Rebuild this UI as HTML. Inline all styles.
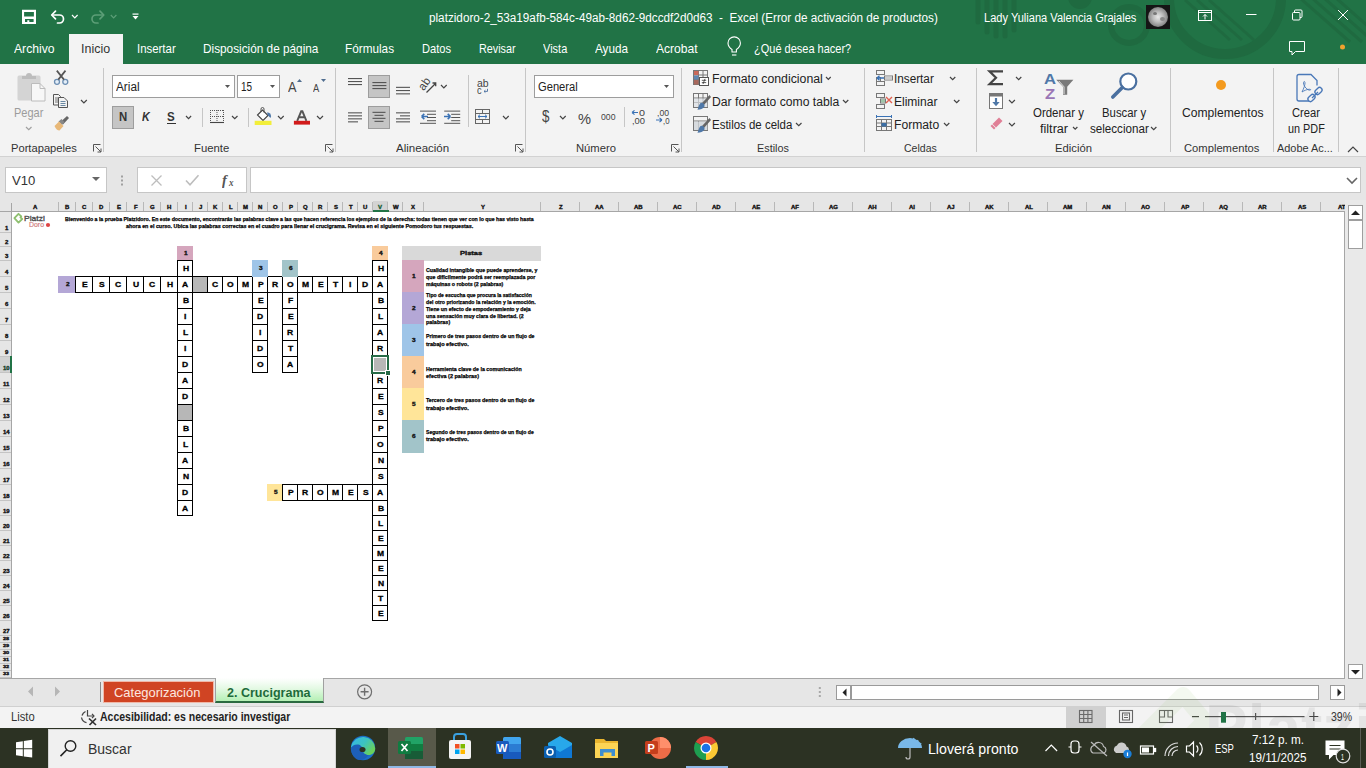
<!DOCTYPE html><html><head><meta charset="utf-8"><style>
*{margin:0;padding:0;box-sizing:border-box}
html,body{width:1366px;height:768px;overflow:hidden;background:#fff;font-family:"Liberation Sans", sans-serif}
.a{position:absolute}
.t{position:absolute;white-space:nowrap}
svg{position:absolute;overflow:visible}
</style></head><body>
<div class="a" style="left:0;top:0;width:1366px;height:64px;background:#217346;overflow:hidden">
<svg style="left:0;top:0" width="1366" height="64">
<g stroke="#1f6a40" stroke-linecap="round" stroke-width="5">
<line x1="978" y1="-5" x2="978" y2="22"/><line x1="987" y1="-5" x2="987" y2="32"/><line x1="996" y1="-5" x2="996" y2="36"/><line x1="1005" y1="-5" x2="1005" y2="36"/><line x1="1014" y1="-5" x2="1014" y2="30"/>
</g>
<circle cx="1080" cy="-3" r="12" fill="#1f6a40"/>
<circle cx="1129" cy="25" r="18" fill="none" stroke="#1f6a40" stroke-width="6"/>
<circle cx="1225" cy="-2" r="56" fill="none" stroke="#1f6a40" stroke-width="10"/>
<g stroke="#1f6a40" stroke-width="3">
<line x1="1185" y1="0" x2="1230" y2="40"/><line x1="1197" y1="0" x2="1242" y2="40"/><line x1="1209" y1="0" x2="1254" y2="40"/>
<line x1="1300" y1="-2" x2="1350" y2="42"/><line x1="1312" y1="-2" x2="1362" y2="42"/><line x1="1324" y1="-2" x2="1374" y2="42"/><line x1="1336" y1="-2" x2="1386" y2="42"/>
</g></svg>
</div>
<svg style="left:0;top:0" width="160" height="34">
<path d="M22 9.8 h14 v14.3 h-14 z M24.1 11.9 v4.6 h9.8 v-4.6 z M25 19 v3.1 h2.3 v-1.8 h2 v1.8 h4.3 v-3.1 z" fill="#fff" fill-rule="evenodd"/>
<g fill="none" stroke="#fff" stroke-width="1.7" stroke-linecap="round" stroke-linejoin="round">
<path d="M52.5 15 h7 a4 4 0 0 1 0 8 h-2"/>
<path d="M55.5 11.2 L51.7 15 L55.5 18.8"/>
</g>
<path d="M72 15 l2.8 2.8 l2.8 -2.8" fill="none" stroke="#fff" stroke-width="1.2"/>
<g fill="none" stroke="#5c9e77" stroke-width="1.7" stroke-linecap="round" stroke-linejoin="round">
<path d="M103 15 h-7 a4 4 0 0 0 0 8 h2"/>
<path d="M100 11.2 L103.8 15 L100 18.8"/>
</g>
<path d="M110.8 15 l2.8 2.8 l2.8 -2.8" fill="none" stroke="#5c9e77" stroke-width="1.2"/>
<g fill="#fff">
<rect x="132.5" y="13.5" width="6" height="1.2"/>
<path d="M132.5 16 h6 l-3 3.6 z"/>
</g>
</svg>
<div class="t" style="left:428.60px;top:12.47px;font-family:'Liberation Sans';font-size:12.5px;line-height:12.5px;font-weight:normal;font-style:normal;color:#fff;transform:scaleX(0.9377);transform-origin:0 10.62px;">platzidoro-2_53a19afb-584c-49ab-8d62-9dccdf2d0d63&nbsp; - &nbsp;Excel (Error de activación de productos)</div>
<div class="t" style="left:984.41px;top:12.07px;font-family:'Liberation Sans';font-size:12.5px;line-height:12.5px;font-weight:normal;font-style:normal;color:#fff;transform:scaleX(0.8867);transform-origin:0 10.62px;">Lady Yuliana Valencia Grajales</div>
<div class="a" style="left:1146px;top:5px;width:24px;height:24px;background:#151515"></div>
<div class="a" style="left:1148px;top:7px;width:20px;height:20px;border-radius:50%;background:radial-gradient(circle at 50% 50%,#e8e8e8 0,#bdbdbd 35%,#8c8c8c 65%,#3a3a3a 92%,#151515 100%)"></div>
<div class="a" style="left:1153px;top:12px;width:4px;height:3px;border-radius:50%;background:#777"></div>
<div class="a" style="left:1160px;top:17px;width:5px;height:4px;border-radius:50%;background:#888"></div>
<svg style="left:0;top:0" width="1366" height="64">
<g fill="none" stroke="#fff" stroke-width="1">
<rect x="1198.5" y="10.5" width="13" height="10"/>
<line x1="1198.5" y1="12.5" x2="1211.5" y2="12.5"/>
<path d="M1205 19.5 v-5 M1203 16.5 l2 -2 l2 2"/>
<line x1="1246" y1="14.5" x2="1256.5" y2="14.5"/>
<rect x="1292.5" y="12.5" width="7.5" height="7.5" rx="1"/>
<path d="M1294.5 12 v-1 a1 1 0 0 1 1 -1 h5.5 a1 1 0 0 1 1 1 v5.5 a1 1 0 0 1 -1 1 h-1"/>
<path d="M1338 10 l10 10 M1348 10 l-10 10"/>
<path d="M1289.5 41.5 h15 v10 h-9 l-3.5 3.5 v-3.5 h-2.5 z"/>
</g>
<circle cx="1342.5" cy="47" r="2.5" fill="#f0a22e"/>
</svg>
<div class="a" style="left:69px;top:34px;width:54px;height:30px;background:#f3f3f3"></div>
<div class="t" style="left:13.50px;top:42.35px;font-family:'Liberation Sans';font-size:13px;line-height:13px;font-weight:normal;font-style:normal;color:#fff;transform:scaleX(0.9370);transform-origin:0 11.05px;">Archivo</div>
<div class="t" style="left:80.54px;top:42.35px;font-family:'Liberation Sans';font-size:13px;line-height:13px;font-weight:normal;font-style:normal;color:#333;transform:scaleX(0.9582);transform-origin:0 11.05px;">Inicio</div>
<div class="t" style="left:136.52px;top:42.35px;font-family:'Liberation Sans';font-size:13px;line-height:13px;font-weight:normal;font-style:normal;color:#fff;transform:scaleX(0.8779);transform-origin:0 11.05px;">Insertar</div>
<div class="t" style="left:202.79px;top:42.35px;font-family:'Liberation Sans';font-size:13px;line-height:13px;font-weight:normal;font-style:normal;color:#fff;transform:scaleX(0.9073);transform-origin:0 11.05px;">Disposición de página</div>
<div class="t" style="left:345.09px;top:42.35px;font-family:'Liberation Sans';font-size:13px;line-height:13px;font-weight:normal;font-style:normal;color:#fff;transform:scaleX(0.9054);transform-origin:0 11.05px;">Fórmulas</div>
<div class="t" style="left:421.75px;top:42.35px;font-family:'Liberation Sans';font-size:13px;line-height:13px;font-weight:normal;font-style:normal;color:#fff;transform:scaleX(0.8548);transform-origin:0 11.05px;">Datos</div>
<div class="t" style="left:478.67px;top:42.35px;font-family:'Liberation Sans';font-size:13px;line-height:13px;font-weight:normal;font-style:normal;color:#fff;transform:scaleX(0.8300);transform-origin:0 11.05px;">Revisar</div>
<div class="t" style="left:542.50px;top:42.35px;font-family:'Liberation Sans';font-size:13px;line-height:13px;font-weight:normal;font-style:normal;color:#fff;transform:scaleX(0.8459);transform-origin:0 11.05px;">Vista</div>
<div class="t" style="left:595.00px;top:42.35px;font-family:'Liberation Sans';font-size:13px;line-height:13px;font-weight:normal;font-style:normal;color:#fff;transform:scaleX(0.9012);transform-origin:0 11.05px;">Ayuda</div>
<div class="t" style="left:656.00px;top:42.35px;font-family:'Liberation Sans';font-size:13px;line-height:13px;font-weight:normal;font-style:normal;color:#fff;transform:scaleX(0.9294);transform-origin:0 11.05px;">Acrobat</div>
<div class="t" style="left:754.00px;top:42.35px;font-family:'Liberation Sans';font-size:13px;line-height:13px;font-weight:normal;font-style:normal;color:#fff;transform:scaleX(0.8459);transform-origin:0 11.05px;">¿Qué desea hacer?</div>
<svg style="left:0;top:0" width="800" height="64">
<g fill="none" stroke="#fff" stroke-width="1.1">
<path d="M732 52 v-2.5 c-2.6 -1.6 -4 -3.8 -4 -6.4 a6.2 6.2 0 0 1 12.4 0 c0 2.6 -1.4 4.8 -4 6.4 v2.5 z"/>
<line x1="732" y1="55" x2="736.4" y2="55"/>
</g></svg>
<div class="a" style="left:0;top:64px;width:1366px;height:92px;background:#f3f3f3"></div>
<div class="a" style="left:0;top:156px;width:1366px;height:1px;background:#d2d2d2"></div>
<div class="a" style="left:103px;top:68px;width:1px;height:84px;background:#c6c6c6"></div>
<div class="a" style="left:335px;top:68px;width:1px;height:84px;background:#c6c6c6"></div>
<div class="a" style="left:525px;top:68px;width:1px;height:84px;background:#c6c6c6"></div>
<div class="a" style="left:681px;top:68px;width:1px;height:84px;background:#c6c6c6"></div>
<div class="a" style="left:864px;top:68px;width:1px;height:84px;background:#c6c6c6"></div>
<div class="a" style="left:976px;top:68px;width:1px;height:84px;background:#c6c6c6"></div>
<div class="a" style="left:1170px;top:68px;width:1px;height:84px;background:#c6c6c6"></div>
<div class="a" style="left:1273px;top:68px;width:1px;height:84px;background:#c6c6c6"></div>
<div class="a" style="left:1338px;top:68px;width:1px;height:84px;background:#c6c6c6"></div>
<div class="t" style="left:10.50px;top:142.72px;font-family:'Liberation Sans';font-size:11.5px;line-height:11.5px;font-weight:normal;font-style:normal;color:#333;transform:scaleX(0.9703);transform-origin:0 9.78px;">Portapapeles</div>
<div class="t" style="left:193.60px;top:142.72px;font-family:'Liberation Sans';font-size:11.5px;line-height:11.5px;font-weight:normal;font-style:normal;color:#333;transform:scaleX(0.9857);transform-origin:0 9.78px;">Fuente</div>
<div class="t" style="left:395.70px;top:142.72px;font-family:'Liberation Sans';font-size:11.5px;line-height:11.5px;font-weight:normal;font-style:normal;color:#333;transform:scaleX(1.0025);transform-origin:0 9.78px;">Alineación</div>
<div class="t" style="left:575.70px;top:142.72px;font-family:'Liberation Sans';font-size:11.5px;line-height:11.5px;font-weight:normal;font-style:normal;color:#333;transform:scaleX(0.9776);transform-origin:0 9.78px;">Número</div>
<div class="t" style="left:756.60px;top:142.72px;font-family:'Liberation Sans';font-size:11.5px;line-height:11.5px;font-weight:normal;font-style:normal;color:#333;transform:scaleX(0.9408);transform-origin:0 9.78px;">Estilos</div>
<div class="t" style="left:903.50px;top:142.72px;font-family:'Liberation Sans';font-size:11.5px;line-height:11.5px;font-weight:normal;font-style:normal;color:#333;transform:scaleX(0.9155);transform-origin:0 9.78px;">Celdas</div>
<div class="t" style="left:1054.80px;top:142.72px;font-family:'Liberation Sans';font-size:11.5px;line-height:11.5px;font-weight:normal;font-style:normal;color:#333;transform:scaleX(0.9807);transform-origin:0 9.78px;">Edición</div>
<div class="t" style="left:1183.60px;top:142.72px;font-family:'Liberation Sans';font-size:11.5px;line-height:11.5px;font-weight:normal;font-style:normal;color:#333;transform:scaleX(0.9744);transform-origin:0 9.78px;">Complementos</div>
<div class="t" style="left:1277.30px;top:142.72px;font-family:'Liberation Sans';font-size:11.5px;line-height:11.5px;font-weight:normal;font-style:normal;color:#333;transform:scaleX(0.9501);transform-origin:0 9.78px;">Adobe Ac...</div>
<svg style="left:92.5px;top:144px" width="9" height="9"><g fill="none" stroke="#555" stroke-width="1"><path d="M0.5 7.5 v-7 h7"/><path d="M2.5 2.5 l5.5 5.5 M8 4.5 v3.5 h-3.5"/></g></svg>
<svg style="left:324.5px;top:144px" width="9" height="9"><g fill="none" stroke="#555" stroke-width="1"><path d="M0.5 7.5 v-7 h7"/><path d="M2.5 2.5 l5.5 5.5 M8 4.5 v3.5 h-3.5"/></g></svg>
<svg style="left:514.5px;top:144px" width="9" height="9"><g fill="none" stroke="#555" stroke-width="1"><path d="M0.5 7.5 v-7 h7"/><path d="M2.5 2.5 l5.5 5.5 M8 4.5 v3.5 h-3.5"/></g></svg>
<svg style="left:670.5px;top:144px" width="9" height="9"><g fill="none" stroke="#555" stroke-width="1"><path d="M0.5 7.5 v-7 h7"/><path d="M2.5 2.5 l5.5 5.5 M8 4.5 v3.5 h-3.5"/></g></svg>
<svg style="left:0;top:0" width="103" height="156">
<rect x="17.5" y="75.5" width="23" height="25" rx="1.5" fill="#d4d4d4"/>
<path d="M22 79 v-3 h4 a3 3 0 0 1 6 0 h4 v3 z" fill="#bdbdbd"/>
<path d="M31.5 83.5 h8.5 l5 5 v12.5 h-13.5 z" fill="#f7f7f7" stroke="#bcbcbc" stroke-width="1"/>
<path d="M40 83.5 v5 h5" fill="none" stroke="#bcbcbc"/>
<g fill="none" stroke="#6d8fb3" stroke-width="1.3">
<circle cx="57" cy="81.8" r="2.5" fill="#e4eef8"/><circle cx="65.3" cy="81.8" r="2.5" fill="#e4eef8"/>
</g>
<path d="M58.3 79.6 l7.2 -9 M64 79.6 l-7.2 -9" stroke="#555" stroke-width="1.7"/>
<g fill="none" stroke="#555" stroke-width="1">
<path d="M53.5 94.5 h5 l2 2 v8.5 h-7 z"/>
<path d="M58.5 97.5 h5.5 l3.5 3.5 v6.5 h-9 z" fill="#f3f3f3"/>
</g>
<path d="M55 98 h3 M55 100 h3 M55 102 h3" stroke="#666" stroke-width="0.9"/>
<path d="M60.5 101.5 h5 M60.5 103.5 h5 M60.5 105.5 h5" stroke="#5a7d9a" stroke-width="0.9"/>
<path d="M60.5 122 l6.5 -6 l2 2 l-6 6.5 z" fill="#666"/>
<path d="M58.5 121.5 l3 -2.5 l3 3 l-2.5 3 z" fill="#888"/>
<path d="M54.5 126 l4.5 -4.5 l4.5 4.5 l-4 4.5 q-3 0 -5 -4.5z" fill="#e8b878"/>
</svg>
<div class="t" style="left:13.75px;top:106.35px;font-family:'Liberation Sans';font-size:13px;line-height:13px;font-weight:normal;font-style:normal;color:#9c9c9c;transform:scaleX(0.8469);transform-origin:0 11.05px;">Pegar</div>
<svg style="left:24.5px;top:125.625px" width="7.5" height="4.75"><path d="M1 1 l2.75 2.75 l2.75 -2.75" fill="none" stroke="#a0a0a0" stroke-width="1.2"/></svg>
<svg style="left:79.5px;top:99.05px" width="7.799999999999997" height="4.899999999999999"><path d="M1 1 l2.8999999999999986 2.8999999999999986 l2.8999999999999986 -2.8999999999999986" fill="none" stroke="#444" stroke-width="1.2"/></svg>
<div class="a" style="left:112px;top:75px;width:123px;height:23px;background:#fff;border:1px solid #9d9d9d"></div>
<div class="t" style="left:115.70px;top:81.08px;font-family:'Liberation Sans';font-size:12.5px;line-height:12.5px;font-weight:normal;font-style:normal;color:#222;transform:scaleX(0.9410);transform-origin:0 10.62px;">Arial</div>
<svg style="left:225px;top:85px" width="6" height="4"><path d="M0 0 h5 l-2.5 3 z" fill="#555"/></svg>
<div class="a" style="left:237px;top:75px;width:43px;height:23px;background:#fff;border:1px solid #9d9d9d"></div>
<div class="t" style="left:240.90px;top:81.08px;font-family:'Liberation Sans';font-size:12.5px;line-height:12.5px;font-weight:normal;font-style:normal;color:#222;transform:scaleX(0.7956);transform-origin:0 10.62px;">15</div>
<svg style="left:270px;top:85px" width="6" height="4"><path d="M0 0 h5 l-2.5 3 z" fill="#555"/></svg>
<div class="t" style="left:288.20px;top:80.30px;font-family:'Liberation Sans';font-size:14px;line-height:14px;font-weight:normal;font-style:normal;color:#444;transform:scaleX(0.9100);transform-origin:0 11.90px;">A</div>
<svg style="left:297px;top:78.5px" width="5" height="4"><path d="M0 3 l2.5 -3 l2.5 3 z" fill="#4f6d8f"/></svg>
<div class="t" style="left:313.20px;top:82.85px;font-family:'Liberation Sans';font-size:11px;line-height:11px;font-weight:normal;font-style:normal;color:#444;transform:scaleX(0.8500);transform-origin:0 9.35px;">A</div>
<svg style="left:320.5px;top:79px" width="5" height="4"><path d="M0 0 h5 l-2.5 3 z" fill="#4f6d8f"/></svg>
<div class="a" style="left:112px;top:106px;width:22px;height:23px;background:#c5c5c5;border:1px solid #9d9d9d"></div>
<div class="t" style="left:118.80px;top:111.17px;font-family:'Liberation Sans';font-size:12.5px;line-height:12.5px;font-weight:bold;font-style:normal;color:#333;transform:scaleX(0.9111);transform-origin:0 10.62px;">N</div>
<div class="t" style="left:142.00px;top:111.17px;font-family:'Liberation Sans';font-size:12.5px;line-height:12.5px;font-weight:bold;font-style:italic;color:#333;transform:scaleX(0.8600);transform-origin:0 10.62px;">K</div>
<div class="t" style="left:167.30px;top:111.17px;font-family:'Liberation Sans';font-size:12.5px;line-height:12.5px;font-weight:bold;font-style:normal;color:#333;transform:scaleX(0.9250);transform-origin:0 10.62px;">S</div>
<div class="a" style="left:166.5px;top:122.5px;width:9px;height:1.2px;background:#333"></div>
<svg style="left:184.9px;top:114.725px" width="7.099999999999994" height="4.549999999999997"><path d="M1 1 l2.549999999999997 2.549999999999997 l2.549999999999997 -2.549999999999997" fill="none" stroke="#444" stroke-width="1.2"/></svg>
<div class="a" style="left:201.5px;top:108px;width:1px;height:19px;background:#c6c6c6"></div>
<svg style="left:0;top:0" width="340" height="156">
<rect x="210" y="110" width="1" height="1" fill="#555"/><rect x="210" y="112" width="1" height="1" fill="#555"/><rect x="210" y="114" width="1" height="1" fill="#555"/><rect x="210" y="116" width="1" height="1" fill="#555"/><rect x="210" y="118" width="1" height="1" fill="#555"/><rect x="210" y="120" width="1" height="1" fill="#555"/><rect x="216.5" y="110" width="1" height="1" fill="#555"/><rect x="216.5" y="112" width="1" height="1" fill="#555"/><rect x="216.5" y="114" width="1" height="1" fill="#555"/><rect x="216.5" y="116" width="1" height="1" fill="#555"/><rect x="216.5" y="118" width="1" height="1" fill="#555"/><rect x="216.5" y="120" width="1" height="1" fill="#555"/><rect x="223" y="110" width="1" height="1" fill="#555"/><rect x="223" y="112" width="1" height="1" fill="#555"/><rect x="223" y="114" width="1" height="1" fill="#555"/><rect x="223" y="116" width="1" height="1" fill="#555"/><rect x="223" y="118" width="1" height="1" fill="#555"/><rect x="223" y="120" width="1" height="1" fill="#555"/><rect x="212" y="110" width="1" height="1" fill="#555"/><rect x="214" y="110" width="1" height="1" fill="#555"/><rect x="216" y="110" width="1" height="1" fill="#555"/><rect x="218" y="110" width="1" height="1" fill="#555"/><rect x="220" y="110" width="1" height="1" fill="#555"/><rect x="222" y="110" width="1" height="1" fill="#555"/><rect x="212" y="116" width="1" height="1" fill="#555"/><rect x="214" y="116" width="1" height="1" fill="#555"/><rect x="216" y="116" width="1" height="1" fill="#555"/><rect x="218" y="116" width="1" height="1" fill="#555"/><rect x="220" y="116" width="1" height="1" fill="#555"/><rect x="222" y="116" width="1" height="1" fill="#555"/>
<path d="M210 122.5 h14" stroke="#444" stroke-width="1.1"/>
</svg>
<svg style="left:231px;top:114.625px" width="7.5" height="4.75"><path d="M1 1 l2.75 2.75 l2.75 -2.75" fill="none" stroke="#444" stroke-width="1.2"/></svg>
<div class="a" style="left:247.5px;top:108px;width:1px;height:19px;background:#c6c6c6"></div>
<svg style="left:0;top:0" width="340" height="156">
<path d="M257.5 115 l5 -5 l5.5 5.5 l-5 5 z" fill="#fff" stroke="#444" stroke-width="1.1"/>
<path d="M261 112 v-3 a1.5 1.5 0 0 1 3 0 v3.5" fill="none" stroke="#555" stroke-width="1"/>
<path d="M267 112.5 a3.5 3.5 0 0 1 4 4 l-0.5 1.5 l-2.5 -2.5 z" fill="#4f78a8"/>
<rect x="254.7" y="120.8" width="16.8" height="4.2" fill="#f2ee3a"/>
<path d="M297.2 120.8 l4 -9.5 h1.2 l4 9.5 M299.2 117.3 h5.8" fill="none" stroke="#555" stroke-width="1.9"/>
<rect x="293.9" y="120.8" width="16.1" height="3.8" fill="#d11a1a"/>
</svg>
<svg style="left:276.9px;top:114.57499999999999px" width="7.7000000000000455" height="4.850000000000023"><path d="M1 1 l2.8500000000000227 2.8500000000000227 l2.8500000000000227 -2.8500000000000227" fill="none" stroke="#444" stroke-width="1.2"/></svg>
<svg style="left:315.6px;top:114.5px" width="8.0" height="5.0"><path d="M1 1 l3.0 3.0 l3.0 -3.0" fill="none" stroke="#444" stroke-width="1.2"/></svg>
<div class="a" style="left:368px;top:75px;width:22px;height:23px;background:#c5c5c5;border:1px solid #9d9d9d"></div>
<div class="a" style="left:368px;top:106px;width:22px;height:23px;background:#c5c5c5;border:1px solid #9d9d9d"></div>
<svg style="left:0;top:0" width="540" height="156"><rect x="348" y="78" width="14" height="1.1" fill="#555"/><rect x="348" y="81" width="14" height="1.1" fill="#555"/><rect x="348" y="84" width="14" height="1.1" fill="#555"/><rect x="372.4" y="82" width="14" height="1.1" fill="#555"/><rect x="372.4" y="85" width="14" height="1.1" fill="#555"/><rect x="372.4" y="88" width="14" height="1.1" fill="#555"/><rect x="396" y="86.8" width="14" height="1.1" fill="#555"/><rect x="396" y="90" width="14" height="1.1" fill="#555"/><rect x="396" y="93.3" width="14" height="1.1" fill="#555"/><rect x="348" y="112.3" width="14" height="1.1" fill="#555"/><rect x="348" y="115.3" width="14" height="1.1" fill="#555"/><rect x="348" y="118.3" width="14" height="1.1" fill="#555"/><rect x="348" y="121.3" width="10" height="1.1" fill="#555"/><rect x="372.5" y="111.8" width="13" height="1.1" fill="#555"/><rect x="374.5" y="114.8" width="9" height="1.1" fill="#555"/><rect x="372.5" y="117.8" width="13" height="1.1" fill="#555"/><rect x="374.5" y="120.8" width="9" height="1.1" fill="#555"/><rect x="396" y="112.3" width="14" height="1.1" fill="#555"/><rect x="400" y="115.3" width="10" height="1.1" fill="#555"/><rect x="396" y="118.3" width="14" height="1.1" fill="#555"/><rect x="396" y="121.3" width="14" height="1.1" fill="#555"/><rect x="420" y="110.6" width="16" height="1" fill="#555"/><rect x="427" y="113.8" width="9" height="1" fill="#555"/><rect x="427" y="117" width="9" height="1" fill="#555"/><rect x="427" y="120.2" width="9" height="1" fill="#555"/><rect x="420" y="122.8" width="16" height="1" fill="#555"/><path d="M428 116.5 h-6.5 M421.5 116.5 l2.8 -2.6 M421.5 116.5 l2.8 2.6" stroke="#3a72b5" stroke-width="1.6" fill="none"/><rect x="444.2" y="110.6" width="16" height="1" fill="#555"/><rect x="451.2" y="113.8" width="9" height="1" fill="#555"/><rect x="451.2" y="117" width="9" height="1" fill="#555"/><rect x="451.2" y="120.2" width="9" height="1" fill="#555"/><rect x="444.2" y="122.8" width="16" height="1" fill="#555"/><path d="M444 116.5 h6.5 M450.5 116.5 l-2.8 -2.6 M450.5 116.5 l-2.8 2.6" stroke="#3a72b5" stroke-width="1.6" fill="none"/><g fill="none" stroke="#666" stroke-width="1"><rect x="475.5" y="109.5" width="14" height="14"/><path d="M475.5 113.5 h14 M475.5 119.5 h14 M482.5 109.5 v4 M482.5 119.5 v4"/></g><path d="M478 116.5 h9 M478 116.5 l2 -1.8 M478 116.5 l2 1.8 M487 116.5 l-2 -1.8 M487 116.5 l-2 1.8" stroke="#3a72b5" stroke-width="1" fill="none"/><path d="M426.5 92.5 l9 -9 M432.5 83 h3.2 v3.2" stroke="#444" stroke-width="1.3" fill="none"/><path d="M487.5 88.8 v2.6 h-3.5 M484 91.4 l1.4 -1.2 M484 91.4 l1.4 1.2" stroke="#4a6fa0" stroke-width="0.9" fill="none"/></svg>
<div class="t" style="left:420px;top:77px;font-family:'Liberation Sans';font-size:11.5px;line-height:11.5px;color:#444;transform:rotate(-55deg);transform-origin:7px 8px">ab</div>
<svg style="left:439.6px;top:83.575px" width="7.699999999999989" height="4.849999999999994"><path d="M1 1 l2.8499999999999943 2.8499999999999943 l2.8499999999999943 -2.8499999999999943" fill="none" stroke="#444" stroke-width="1.2"/></svg>
<div class="t" style="left:477.00px;top:77.75px;font-family:'Liberation Sans';font-size:11px;line-height:11px;font-weight:normal;font-style:normal;color:#444;transform:scaleX(0.9490);transform-origin:0 9.35px;">ab</div>
<div class="t" style="left:477.00px;top:84.55px;font-family:'Liberation Sans';font-size:11px;line-height:11px;font-weight:normal;font-style:normal;color:#444;transform:scaleX(0.8333);transform-origin:0 9.35px;">c</div>
<svg style="left:501.7px;top:114.575px" width="7.699999999999989" height="4.849999999999994"><path d="M1 1 l2.8499999999999943 2.8499999999999943 l2.8499999999999943 -2.8499999999999943" fill="none" stroke="#444" stroke-width="1.2"/></svg>
<div class="a" style="left:467.5px;top:75px;width:1px;height:52px;background:#c6c6c6"></div>
<div class="a" style="left:534px;top:75px;width:140px;height:23px;background:#fff;border:1px solid #9d9d9d"></div>
<div class="t" style="left:537.70px;top:80.88px;font-family:'Liberation Sans';font-size:12.5px;line-height:12.5px;font-weight:normal;font-style:normal;color:#222;transform:scaleX(0.8926);transform-origin:0 10.62px;">General</div>
<svg style="left:664px;top:85px" width="6" height="4"><path d="M0 0 h5 l-2.5 3 z" fill="#555"/></svg>
<div class="t" style="left:541.70px;top:109.10px;font-family:'Liberation Sans';font-size:16px;line-height:16px;font-weight:normal;font-style:normal;color:#444;transform:scaleX(0.8333);transform-origin:0 13.60px;">$</div>
<svg style="left:558.8px;top:115.07499999999999px" width="7.7000000000000455" height="4.850000000000023"><path d="M1 1 l2.8500000000000227 2.8500000000000227 l2.8500000000000227 -2.8500000000000227" fill="none" stroke="#444" stroke-width="1.2"/></svg>
<div class="t" style="left:578.10px;top:110.95px;font-family:'Liberation Sans';font-size:15px;line-height:15px;font-weight:normal;font-style:normal;color:#444;transform:scaleX(0.9769);transform-origin:0 12.75px;">%</div>
<div class="t" style="left:600.80px;top:112.42px;font-family:'Liberation Sans';font-size:9.5px;line-height:9.5px;font-weight:normal;font-style:normal;color:#444;transform:scaleX(0.9122);transform-origin:0 8.07px;">000</div>
<div class="a" style="left:623.5px;top:107px;width:1px;height:20px;background:#c6c6c6"></div>
<div class="t" style="left:639.00px;top:109.05px;font-family:'Liberation Sans';font-size:9px;line-height:9px;font-weight:normal;font-style:normal;color:#444;transform:scaleX(1.2000);transform-origin:0 7.65px;">0</div>
<div class="t" style="left:632.00px;top:116.55px;font-family:'Liberation Sans';font-size:9px;line-height:9px;font-weight:normal;font-style:normal;color:#444;transform:scaleX(1.0395);transform-origin:0 7.65px;">,00</div>
<svg style="left:0;top:0" width="680" height="156"><path d="M638 112.5 h-6 M632 112.5 l2.5 -2.2 M632 112.5 l2.5 2.2" stroke="#3a72b5" stroke-width="1.1" fill="none"/><path d="M656 120 h6 M662 120 l-2.5 -2.2 M662 120 l-2.5 2.2" stroke="#3a72b5" stroke-width="1.1" fill="none"/></svg>
<div class="t" style="left:657.00px;top:109.05px;font-family:'Liberation Sans';font-size:9px;line-height:9px;font-weight:normal;font-style:normal;color:#444;transform:scaleX(0.9596);transform-origin:0 7.65px;">,00</div>
<div class="t" style="left:662.50px;top:116.55px;font-family:'Liberation Sans';font-size:9px;line-height:9px;font-weight:normal;font-style:normal;color:#444;transform:scaleX(0.8666);transform-origin:0 7.65px;">,0</div>
<svg style="left:0;top:0" width="870" height="156">
<g fill="none" stroke="#777" stroke-width="1">
<rect x="693.5" y="70.5" width="14" height="14"/><path d="M693.5 75 h14 M693.5 79.5 h14 M698.5 70.5 v14 M703 70.5 v14"/>
</g>
<rect x="694" y="71" width="4.5" height="4" fill="#c9695a"/><rect x="694" y="75.5" width="4.5" height="4" fill="#5e86b2"/><rect x="694" y="80" width="4.5" height="4.5" fill="#a8685c"/>
<rect x="699.5" y="77.5" width="9" height="8" fill="#fff" stroke="#555"/>
<path d="M701.8 80.3 h4.4 M701.8 82.6 h4.4 M705 78.8 l-2 5.2" stroke="#333" stroke-width="0.8"/>
<g fill="none" stroke="#777" stroke-width="1">
<rect x="693.5" y="93.5" width="14" height="14"/><path d="M693.5 98 h14 M693.5 102.5 h14 M698.5 93.5 v14 M703 93.5 v14"/>
</g>
<rect x="694" y="98.5" width="13.5" height="8.5" fill="#d8dde2" opacity="0.7"/>
<path d="M709.5 95 l-8 8.5 l2 2 l7.5 -8.5 z" fill="#666"/>
<path d="M700.5 103 a3 3 0 0 1 4 3.5 c-1.5 2.5 -4 3 -7 3.2 c1 -2 1.2 -5 3 -6.7z" fill="#4f78a8"/>
<g fill="none" stroke="#777" stroke-width="1">
<rect x="693.5" y="116.5" width="14" height="14"/><path d="M693.5 121 h14 M698.5 121 v9.5"/>
</g>
<rect x="694" y="121.5" width="13.5" height="8.5" fill="#cfd4d9" opacity="0.8"/>
<path d="M709.5 118 l-8 8.5 l2 2 l7.5 -8.5 z" fill="#666"/>
<path d="M700.5 126 a3 3 0 0 1 4 3.5 c-1.5 2.5 -4 3 -7 3.2 c1 -2 1.2 -5 3 -6.7z" fill="#4f78a8"/>
</svg>
<div class="t" style="left:711.62px;top:73.08px;font-family:'Liberation Sans';font-size:12.5px;line-height:12.5px;font-weight:normal;font-style:normal;color:#222;transform:scaleX(0.9849);transform-origin:0 10.62px;">Formato condicional</div>
<svg style="left:825.2px;top:75.82500000000002px" width="6.699999999999932" height="4.349999999999966"><path d="M1 1 l2.349999999999966 2.349999999999966 l2.349999999999966 -2.349999999999966" fill="none" stroke="#444" stroke-width="1.2"/></svg>
<div class="t" style="left:711.63px;top:96.08px;font-family:'Liberation Sans';font-size:12.5px;line-height:12.5px;font-weight:normal;font-style:normal;color:#222;transform:scaleX(0.9741);transform-origin:0 10.62px;">Dar formato como tabla</div>
<svg style="left:842px;top:98.67500000000001px" width="7.2999999999999545" height="4.649999999999977"><path d="M1 1 l2.6499999999999773 2.6499999999999773 l2.6499999999999773 -2.6499999999999773" fill="none" stroke="#444" stroke-width="1.2"/></svg>
<div class="t" style="left:711.68px;top:118.98px;font-family:'Liberation Sans';font-size:12.5px;line-height:12.5px;font-weight:normal;font-style:normal;color:#222;transform:scaleX(0.9180);transform-origin:0 10.62px;">Estilos de celda</div>
<svg style="left:795px;top:121.625px" width="7.5" height="4.75"><path d="M1 1 l2.75 2.75 l2.75 -2.75" fill="none" stroke="#444" stroke-width="1.2"/></svg>
<svg style="left:0;top:0" width="980" height="156">
<g fill="none" stroke="#777" stroke-width="1">
<rect x="876.5" y="70.5" width="8" height="4"/><rect x="876.5" y="81.5" width="8" height="4"/><rect x="876.5" y="77.5" width="4" height="4"/>
<rect x="884.5" y="76" width="8" height="4"/>
</g>
<rect x="885" y="76.5" width="7" height="3" fill="#ccc"/>
<path d="M884 78 h-7 M877 78 l2.5 -2.2 M877 78 l2.5 2.2" stroke="#3a72b5" stroke-width="1.4" fill="none"/>
<g fill="none" stroke="#777" stroke-width="1">
<rect x="876.5" y="93.5" width="8" height="4"/><rect x="876.5" y="104.5" width="8" height="4"/><rect x="880.5" y="99" width="5" height="4"/>
</g>
<rect x="881" y="99.5" width="4" height="3" fill="#9fc5a8"/>
<path d="M886 97 l6 6 M892 97 l-6 6" stroke="#e06050" stroke-width="1.4"/>
<g fill="none" stroke="#777" stroke-width="1">
<rect x="876.5" y="119.5" width="15" height="11"/><path d="M876.5 123 h15 M876.5 126.5 h15 M881.5 119.5 v11 M886.5 119.5 v11"/>
<path d="M876.5 116.5 h15 M876.5 115 v3 M891.5 115 v3" stroke="#3a72b5"/>
</g>
<rect x="881.5" y="123" width="5" height="3.5" fill="#3b6ea5"/>
</svg>
<div class="t" style="left:894.46px;top:72.98px;font-family:'Liberation Sans';font-size:12.5px;line-height:12.5px;font-weight:normal;font-style:normal;color:#222;transform:scaleX(0.9390);transform-origin:0 10.62px;">Insertar</div>
<svg style="left:948.7px;top:76.07500000000002px" width="7.2999999999999545" height="4.649999999999977"><path d="M1 1 l2.6499999999999773 2.6499999999999773 l2.6499999999999773 -2.6499999999999773" fill="none" stroke="#444" stroke-width="1.2"/></svg>
<div class="t" style="left:894.44px;top:96.08px;font-family:'Liberation Sans';font-size:12.5px;line-height:12.5px;font-weight:normal;font-style:normal;color:#222;transform:scaleX(0.9617);transform-origin:0 10.62px;">Eliminar</div>
<svg style="left:952.9px;top:99.05000000000001px" width="7.399999999999977" height="4.699999999999989"><path d="M1 1 l2.6999999999999886 2.6999999999999886 l2.6999999999999886 -2.6999999999999886" fill="none" stroke="#444" stroke-width="1.2"/></svg>
<div class="t" style="left:894.43px;top:119.08px;font-family:'Liberation Sans';font-size:12.5px;line-height:12.5px;font-weight:normal;font-style:normal;color:#222;transform:scaleX(0.9718);transform-origin:0 10.62px;">Formato</div>
<svg style="left:943px;top:121.57500000000002px" width="7.2999999999999545" height="4.649999999999977"><path d="M1 1 l2.6499999999999773 2.6499999999999773 l2.6499999999999773 -2.6499999999999773" fill="none" stroke="#444" stroke-width="1.2"/></svg>
<svg style="left:0;top:0" width="1170" height="156">
<path d="M1003 71.3 h-13.5 l6.5 6.4 l-6.5 6.4 h13.5" fill="none" stroke="#444" stroke-width="2.2"/>
<rect x="989.5" y="93.5" width="13" height="15" fill="#fff" stroke="#777"/>
<rect x="989" y="93" width="14" height="3.5" fill="#777"/>
<path d="M996 98 v5" stroke="#4f78a8" stroke-width="2.2"/><path d="M992.3 102 h7.4 l-3.7 4.2 z" fill="#4f78a8"/>
<path d="M992.5 124 l6.5 -6.5 l3.5 3.5 l-6.5 6.5 z" fill="#e07f96"/><path d="M990.5 126 l1.5 -1.5 l3.5 3.5 l-1.5 1.5 z" fill="#e07f96"/>
<path d="M1056.2 79.8 h17.2 l-6.2 7 v8 h-4.2 v-8 z" fill="#7a7a7a"/><path d="M1058.8 81 l5.2 5.8 v7.2" fill="none" stroke="#f3f3f3" stroke-width="0.9"/>
<circle cx="1128.3" cy="81.5" r="8" fill="#fff" stroke="#4a70a0" stroke-width="2.2"/>
<path d="M1122.3 87.5 l-9.5 9.5" stroke="#4a70a0" stroke-width="3.6" stroke-linecap="round"/>
</svg>
<svg style="left:1014.8px;top:75.57499999999999px" width="7.300000000000068" height="4.650000000000034"><path d="M1 1 l2.650000000000034 2.650000000000034 l2.650000000000034 -2.650000000000034" fill="none" stroke="#444" stroke-width="1.2"/></svg>
<svg style="left:1007.5px;top:98.825px" width="7.899999999999977" height="4.949999999999989"><path d="M1 1 l2.9499999999999886 2.9499999999999886 l2.9499999999999886 -2.9499999999999886" fill="none" stroke="#444" stroke-width="1.2"/></svg>
<svg style="left:1007.5px;top:121.525px" width="7.899999999999977" height="4.949999999999989"><path d="M1 1 l2.9499999999999886 2.9499999999999886 l2.9499999999999886 -2.9499999999999886" fill="none" stroke="#444" stroke-width="1.2"/></svg>
<div class="t" style="left:1044.00px;top:71.12px;font-family:'Liberation Sans';font-size:15.5px;line-height:15.5px;font-weight:bold;font-style:normal;color:#4f78a8;transform:scaleX(1.0727);transform-origin:0 13.17px;">A</div>
<div class="t" style="left:1044.80px;top:86.15px;font-family:'Liberation Sans';font-size:15px;line-height:15px;font-weight:bold;font-style:normal;color:#9a76b6;transform:scaleX(1.1111);transform-origin:0 12.75px;">Z</div>
<div class="t" style="left:1033.40px;top:107.08px;font-family:'Liberation Sans';font-size:12.5px;line-height:12.5px;font-weight:normal;font-style:normal;color:#222;transform:scaleX(0.9161);transform-origin:0 10.62px;">Ordenar y</div>
<div class="t" style="left:1040.10px;top:122.88px;font-family:'Liberation Sans';font-size:12.5px;line-height:12.5px;font-weight:normal;font-style:normal;color:#222;transform:scaleX(1.0103);transform-origin:0 10.62px;">filtrar</div>
<svg style="left:1071.6px;top:126.29999999999998px" width="6.400000000000091" height="4.2000000000000455"><path d="M1 1 l2.2000000000000455 2.2000000000000455 l2.2000000000000455 -2.2000000000000455" fill="none" stroke="#444" stroke-width="1.2"/></svg>
<div class="t" style="left:1102.49px;top:107.08px;font-family:'Liberation Sans';font-size:12.5px;line-height:12.5px;font-weight:normal;font-style:normal;color:#222;transform:scaleX(0.9075);transform-origin:0 10.62px;">Buscar y</div>
<div class="t" style="left:1090.20px;top:122.88px;font-family:'Liberation Sans';font-size:12.5px;line-height:12.5px;font-weight:normal;font-style:normal;color:#222;transform:scaleX(0.9292);transform-origin:0 10.62px;">seleccionar</div>
<svg style="left:1150.4px;top:126.05000000000004px" width="7.399999999999864" height="4.699999999999932"><path d="M1 1 l2.699999999999932 2.699999999999932 l2.699999999999932 -2.699999999999932" fill="none" stroke="#444" stroke-width="1.2"/></svg>
<div class="a" style="left:1215.8px;top:79.8px;width:10.4px;height:10.4px;border-radius:50%;background:#f39a1e"></div>
<div class="t" style="left:1181.80px;top:107.17px;font-family:'Liberation Sans';font-size:12.5px;line-height:12.5px;font-weight:normal;font-style:normal;color:#222;transform:scaleX(0.9688);transform-origin:0 10.62px;">Complementos</div>
<svg style="left:0;top:0" width="1366" height="156">
<path d="M1299 74.5 h12 l6 6 v5 M1309 101 h-10 a2 2 0 0 1 -2 -2 v-22.5 a2 2 0 0 1 2 -2" fill="none" stroke="#4a78b8" stroke-width="1.3"/>
<path d="M1302 92 c2 -4 3 -7 3 -9 c0 -2 -1.5 -2 -1.5 0 c0 3 4 8 7 7 c1 -1 -3 -1.5 -8.5 2" fill="none" stroke="#4a78b8" stroke-width="0.9"/>
<path d="M1312 98 l6 -6" stroke="#4a78b8" stroke-width="1.3"/>
<rect x="1309" y="94" width="5" height="8" rx="2.5" transform="rotate(45 1311.5 98)" fill="none" stroke="#4a78b8" stroke-width="1.3"/>
<rect x="1316" y="87" width="5" height="8" rx="2.5" transform="rotate(45 1318.5 91)" fill="none" stroke="#4a78b8" stroke-width="1.3"/>
</svg>
<div class="t" style="left:1292.20px;top:107.08px;font-family:'Liberation Sans';font-size:12.5px;line-height:12.5px;font-weight:normal;font-style:normal;color:#222;transform:scaleX(0.8941);transform-origin:0 10.62px;">Crear</div>
<div class="t" style="left:1287.60px;top:122.98px;font-family:'Liberation Sans';font-size:12.5px;line-height:12.5px;font-weight:normal;font-style:normal;color:#222;transform:scaleX(0.8680);transform-origin:0 10.62px;">un PDF</div>
<svg style="left:1347px;top:146px" width="12" height="7"><path d="M1 6 l5 -5 l5 5" fill="none" stroke="#444" stroke-width="1.2"/></svg>
<div class="a" style="left:0;top:157px;width:1366px;height:43px;background:#e6e6e6"></div>
<div class="a" style="left:5px;top:167px;width:102px;height:26px;background:#fff;border:1px solid #c6c6c6"></div>
<div class="t" style="left:12.00px;top:174.25px;font-family:'Liberation Sans';font-size:13px;line-height:13px;font-weight:normal;font-style:normal;color:#333;transform:scaleX(1.0087);transform-origin:0 11.05px;">V10</div>
<svg style="left:92px;top:177px" width="9" height="5"><path d="M0 0 h8 l-4 4 z" fill="#666"/></svg>
<svg style="left:120px;top:174px" width="4" height="14"><rect x="1" y="1.5" width="2" height="2" fill="#a0a0a0"/><rect x="1" y="5.5" width="2" height="2" fill="#a0a0a0"/><rect x="1" y="9.5" width="2" height="2" fill="#a0a0a0"/></svg>
<div class="a" style="left:137px;top:167px;width:110px;height:26px;background:#fff;border:1px solid #c6c6c6"></div>
<svg style="left:0;top:0" width="260" height="200"><path d="M151.5 175.5 l10 10 M161.5 175.5 l-10 10" stroke="#bdbdbd" stroke-width="1.3"/><path d="M186 180.5 l4 4.3 l8.5 -9.5" fill="none" stroke="#bdbdbd" stroke-width="1.6"/></svg>
<div class="t" style="left:222.30px;top:174.40px;font-family:'Liberation Serif';font-size:14px;line-height:14px;font-weight:bold;font-style:italic;color:#555;transform:scaleX(1.0333);transform-origin:0 11.90px;">f</div>
<div class="t" style="left:229.40px;top:177.80px;font-family:'Liberation Serif';font-size:10px;line-height:10px;font-weight:bold;font-style:italic;color:#555;transform:scaleX(0.9000);transform-origin:0 8.50px;">x</div>
<div class="a" style="left:250px;top:167px;width:1111px;height:26px;background:#fff;border:1px solid #c6c6c6"></div>
<svg style="left:1346px;top:177px" width="12" height="8"><path d="M1 1 l5 5 l5 -5" fill="none" stroke="#666" stroke-width="1.6"/></svg>
<div class="a" style="left:0;top:200px;width:1345px;height:11px;background:#e6e6e6"></div>
<div class="a" style="left:0;top:211px;width:11px;height:467px;background:#e6e6e6"></div>
<div class="a" style="left:11px;top:211px;width:1333px;height:467px;background:#fff"></div>
<div class="a" style="left:373px;top:201px;width:15px;height:10px;background:#d3d3d3"></div>
<div class="a" style="left:0;top:356px;width:11px;height:16px;background:#d3d3d3"></div>
<div class="a" style="left:58px;top:202px;width:1px;height:9px;background:#b8b8b8"></div><div class="a" style="left:75px;top:202px;width:1px;height:9px;background:#b8b8b8"></div><div class="a" style="left:92px;top:202px;width:1px;height:9px;background:#b8b8b8"></div><div class="a" style="left:109px;top:202px;width:1px;height:9px;background:#b8b8b8"></div><div class="a" style="left:126px;top:202px;width:1px;height:9px;background:#b8b8b8"></div><div class="a" style="left:143px;top:202px;width:1px;height:9px;background:#b8b8b8"></div><div class="a" style="left:160px;top:202px;width:1px;height:9px;background:#b8b8b8"></div><div class="a" style="left:177px;top:202px;width:1px;height:9px;background:#b8b8b8"></div><div class="a" style="left:192px;top:202px;width:1px;height:9px;background:#b8b8b8"></div><div class="a" style="left:207px;top:202px;width:1px;height:9px;background:#b8b8b8"></div><div class="a" style="left:222px;top:202px;width:1px;height:9px;background:#b8b8b8"></div><div class="a" style="left:237px;top:202px;width:1px;height:9px;background:#b8b8b8"></div><div class="a" style="left:252px;top:202px;width:1px;height:9px;background:#b8b8b8"></div><div class="a" style="left:267px;top:202px;width:1px;height:9px;background:#b8b8b8"></div><div class="a" style="left:282px;top:202px;width:1px;height:9px;background:#b8b8b8"></div><div class="a" style="left:297px;top:202px;width:1px;height:9px;background:#b8b8b8"></div><div class="a" style="left:312px;top:202px;width:1px;height:9px;background:#b8b8b8"></div><div class="a" style="left:327px;top:202px;width:1px;height:9px;background:#b8b8b8"></div><div class="a" style="left:342px;top:202px;width:1px;height:9px;background:#b8b8b8"></div><div class="a" style="left:357px;top:202px;width:1px;height:9px;background:#b8b8b8"></div><div class="a" style="left:372px;top:202px;width:1px;height:9px;background:#b8b8b8"></div><div class="a" style="left:387px;top:202px;width:1px;height:9px;background:#b8b8b8"></div><div class="a" style="left:402px;top:202px;width:1px;height:9px;background:#b8b8b8"></div><div class="a" style="left:423px;top:202px;width:1px;height:9px;background:#b8b8b8"></div><div class="a" style="left:540px;top:202px;width:1px;height:9px;background:#b8b8b8"></div><div class="a" style="left:579px;top:202px;width:1px;height:9px;background:#b8b8b8"></div><div class="a" style="left:618px;top:202px;width:1px;height:9px;background:#b8b8b8"></div><div class="a" style="left:657px;top:202px;width:1px;height:9px;background:#b8b8b8"></div><div class="a" style="left:696px;top:202px;width:1px;height:9px;background:#b8b8b8"></div><div class="a" style="left:735px;top:202px;width:1px;height:9px;background:#b8b8b8"></div><div class="a" style="left:774px;top:202px;width:1px;height:9px;background:#b8b8b8"></div><div class="a" style="left:813px;top:202px;width:1px;height:9px;background:#b8b8b8"></div><div class="a" style="left:852px;top:202px;width:1px;height:9px;background:#b8b8b8"></div><div class="a" style="left:891px;top:202px;width:1px;height:9px;background:#b8b8b8"></div><div class="a" style="left:930px;top:202px;width:1px;height:9px;background:#b8b8b8"></div><div class="a" style="left:969px;top:202px;width:1px;height:9px;background:#b8b8b8"></div><div class="a" style="left:1008px;top:202px;width:1px;height:9px;background:#b8b8b8"></div><div class="a" style="left:1047px;top:202px;width:1px;height:9px;background:#b8b8b8"></div><div class="a" style="left:1086px;top:202px;width:1px;height:9px;background:#b8b8b8"></div><div class="a" style="left:1125px;top:202px;width:1px;height:9px;background:#b8b8b8"></div><div class="a" style="left:1164px;top:202px;width:1px;height:9px;background:#b8b8b8"></div><div class="a" style="left:1203px;top:202px;width:1px;height:9px;background:#b8b8b8"></div><div class="a" style="left:1242px;top:202px;width:1px;height:9px;background:#b8b8b8"></div><div class="a" style="left:1281px;top:202px;width:1px;height:9px;background:#b8b8b8"></div><div class="a" style="left:1320px;top:202px;width:1px;height:9px;background:#b8b8b8"></div><div class="a" style="left:1359px;top:202px;width:1px;height:9px;background:#b8b8b8"></div>
<div class="t" style="left:33.40px;top:205.69px;font-family:'Liberation Sans';font-size:4.6px;line-height:4.6px;font-weight:bold;font-style:normal;color:#111;transform:scaleX(1.3000);transform-origin:0 3.91px;-webkit-text-stroke:0.3px #111">A</div>
<div class="t" style="left:65.40px;top:205.69px;font-family:'Liberation Sans';font-size:4.6px;line-height:4.6px;font-weight:bold;font-style:normal;color:#111;transform:scaleX(1.3000);transform-origin:0 3.91px;-webkit-text-stroke:0.3px #111">B</div>
<div class="t" style="left:82.40px;top:205.69px;font-family:'Liberation Sans';font-size:4.6px;line-height:4.6px;font-weight:bold;font-style:normal;color:#111;transform:scaleX(1.3000);transform-origin:0 3.91px;-webkit-text-stroke:0.3px #111">C</div>
<div class="t" style="left:99.40px;top:205.69px;font-family:'Liberation Sans';font-size:4.6px;line-height:4.6px;font-weight:bold;font-style:normal;color:#111;transform:scaleX(1.3000);transform-origin:0 3.91px;-webkit-text-stroke:0.3px #111">D</div>
<div class="t" style="left:117.05px;top:205.69px;font-family:'Liberation Sans';font-size:4.6px;line-height:4.6px;font-weight:bold;font-style:normal;color:#111;transform:scaleX(1.3000);transform-origin:0 3.91px;-webkit-text-stroke:0.3px #111">E</div>
<div class="t" style="left:134.05px;top:205.69px;font-family:'Liberation Sans';font-size:4.6px;line-height:4.6px;font-weight:bold;font-style:normal;color:#111;transform:scaleX(1.3000);transform-origin:0 3.91px;-webkit-text-stroke:0.3px #111">F</div>
<div class="t" style="left:150.40px;top:205.69px;font-family:'Liberation Sans';font-size:4.6px;line-height:4.6px;font-weight:bold;font-style:normal;color:#111;transform:scaleX(1.3000);transform-origin:0 3.91px;-webkit-text-stroke:0.3px #111">G</div>
<div class="t" style="left:167.40px;top:205.69px;font-family:'Liberation Sans';font-size:4.6px;line-height:4.6px;font-weight:bold;font-style:normal;color:#111;transform:scaleX(1.3000);transform-origin:0 3.91px;-webkit-text-stroke:0.3px #111">H</div>
<div class="t" style="left:185.35px;top:205.69px;font-family:'Liberation Sans';font-size:4.6px;line-height:4.6px;font-weight:bold;font-style:normal;color:#111;transform:scaleX(1.3000);transform-origin:0 3.91px;-webkit-text-stroke:0.3px #111">I</div>
<div class="t" style="left:199.05px;top:205.69px;font-family:'Liberation Sans';font-size:4.6px;line-height:4.6px;font-weight:bold;font-style:normal;color:#111;transform:scaleX(1.3000);transform-origin:0 3.91px;-webkit-text-stroke:0.3px #111">J</div>
<div class="t" style="left:213.40px;top:205.69px;font-family:'Liberation Sans';font-size:4.6px;line-height:4.6px;font-weight:bold;font-style:normal;color:#111;transform:scaleX(1.3000);transform-origin:0 3.91px;-webkit-text-stroke:0.3px #111">K</div>
<div class="t" style="left:229.05px;top:205.69px;font-family:'Liberation Sans';font-size:4.6px;line-height:4.6px;font-weight:bold;font-style:normal;color:#111;transform:scaleX(1.3000);transform-origin:0 3.91px;-webkit-text-stroke:0.3px #111">L</div>
<div class="t" style="left:243.40px;top:205.69px;font-family:'Liberation Sans';font-size:4.6px;line-height:4.6px;font-weight:bold;font-style:normal;color:#111;transform:scaleX(1.3000);transform-origin:0 3.91px;-webkit-text-stroke:0.3px #111">M</div>
<div class="t" style="left:258.40px;top:205.69px;font-family:'Liberation Sans';font-size:4.6px;line-height:4.6px;font-weight:bold;font-style:normal;color:#111;transform:scaleX(1.3000);transform-origin:0 3.91px;-webkit-text-stroke:0.3px #111">N</div>
<div class="t" style="left:273.40px;top:205.69px;font-family:'Liberation Sans';font-size:4.6px;line-height:4.6px;font-weight:bold;font-style:normal;color:#111;transform:scaleX(1.3000);transform-origin:0 3.91px;-webkit-text-stroke:0.3px #111">O</div>
<div class="t" style="left:289.05px;top:205.69px;font-family:'Liberation Sans';font-size:4.6px;line-height:4.6px;font-weight:bold;font-style:normal;color:#111;transform:scaleX(1.3000);transform-origin:0 3.91px;-webkit-text-stroke:0.3px #111">P</div>
<div class="t" style="left:303.40px;top:205.69px;font-family:'Liberation Sans';font-size:4.6px;line-height:4.6px;font-weight:bold;font-style:normal;color:#111;transform:scaleX(1.3000);transform-origin:0 3.91px;-webkit-text-stroke:0.3px #111">Q</div>
<div class="t" style="left:318.40px;top:205.69px;font-family:'Liberation Sans';font-size:4.6px;line-height:4.6px;font-weight:bold;font-style:normal;color:#111;transform:scaleX(1.3000);transform-origin:0 3.91px;-webkit-text-stroke:0.3px #111">R</div>
<div class="t" style="left:334.05px;top:205.69px;font-family:'Liberation Sans';font-size:4.6px;line-height:4.6px;font-weight:bold;font-style:normal;color:#111;transform:scaleX(1.3000);transform-origin:0 3.91px;-webkit-text-stroke:0.3px #111">S</div>
<div class="t" style="left:349.05px;top:205.69px;font-family:'Liberation Sans';font-size:4.6px;line-height:4.6px;font-weight:bold;font-style:normal;color:#111;transform:scaleX(1.3000);transform-origin:0 3.91px;-webkit-text-stroke:0.3px #111">T</div>
<div class="t" style="left:363.40px;top:205.69px;font-family:'Liberation Sans';font-size:4.6px;line-height:4.6px;font-weight:bold;font-style:normal;color:#111;transform:scaleX(1.3000);transform-origin:0 3.91px;-webkit-text-stroke:0.3px #111">U</div>
<div class="t" style="left:378.40px;top:205.69px;font-family:'Liberation Sans';font-size:4.6px;line-height:4.6px;font-weight:bold;font-style:normal;color:#1b5e37;transform:scaleX(1.3000);transform-origin:0 3.91px;-webkit-text-stroke:0.3px #1b5e37">V</div>
<div class="t" style="left:392.75px;top:205.69px;font-family:'Liberation Sans';font-size:4.6px;line-height:4.6px;font-weight:bold;font-style:normal;color:#111;transform:scaleX(1.3000);transform-origin:0 3.91px;-webkit-text-stroke:0.3px #111">W</div>
<div class="t" style="left:411.40px;top:205.69px;font-family:'Liberation Sans';font-size:4.6px;line-height:4.6px;font-weight:bold;font-style:normal;color:#111;transform:scaleX(1.3000);transform-origin:0 3.91px;-webkit-text-stroke:0.3px #111">X</div>
<div class="t" style="left:481.05px;top:205.69px;font-family:'Liberation Sans';font-size:4.6px;line-height:4.6px;font-weight:bold;font-style:normal;color:#111;transform:scaleX(1.3000);transform-origin:0 3.91px;-webkit-text-stroke:0.3px #111">Y</div>
<div class="t" style="left:559.05px;top:205.69px;font-family:'Liberation Sans';font-size:4.6px;line-height:4.6px;font-weight:bold;font-style:normal;color:#111;transform:scaleX(1.3000);transform-origin:0 3.91px;-webkit-text-stroke:0.3px #111">Z</div>
<div class="t" style="left:595.24px;top:205.69px;font-family:'Liberation Sans';font-size:4.6px;line-height:4.6px;font-weight:bold;font-style:normal;color:#111;transform:scaleX(1.3000);transform-origin:0 3.91px;-webkit-text-stroke:0.3px #111">AA</div>
<div class="t" style="left:634.24px;top:205.69px;font-family:'Liberation Sans';font-size:4.6px;line-height:4.6px;font-weight:bold;font-style:normal;color:#111;transform:scaleX(1.3000);transform-origin:0 3.91px;-webkit-text-stroke:0.3px #111">AB</div>
<div class="t" style="left:673.24px;top:205.69px;font-family:'Liberation Sans';font-size:4.6px;line-height:4.6px;font-weight:bold;font-style:normal;color:#111;transform:scaleX(1.3000);transform-origin:0 3.91px;-webkit-text-stroke:0.3px #111">AC</div>
<div class="t" style="left:712.24px;top:205.69px;font-family:'Liberation Sans';font-size:4.6px;line-height:4.6px;font-weight:bold;font-style:normal;color:#111;transform:scaleX(1.3000);transform-origin:0 3.91px;-webkit-text-stroke:0.3px #111">AD</div>
<div class="t" style="left:751.89px;top:205.69px;font-family:'Liberation Sans';font-size:4.6px;line-height:4.6px;font-weight:bold;font-style:normal;color:#111;transform:scaleX(1.3000);transform-origin:0 3.91px;-webkit-text-stroke:0.3px #111">AE</div>
<div class="t" style="left:790.89px;top:205.69px;font-family:'Liberation Sans';font-size:4.6px;line-height:4.6px;font-weight:bold;font-style:normal;color:#111;transform:scaleX(1.3000);transform-origin:0 3.91px;-webkit-text-stroke:0.3px #111">AF</div>
<div class="t" style="left:829.24px;top:205.69px;font-family:'Liberation Sans';font-size:4.6px;line-height:4.6px;font-weight:bold;font-style:normal;color:#111;transform:scaleX(1.3000);transform-origin:0 3.91px;-webkit-text-stroke:0.3px #111">AG</div>
<div class="t" style="left:868.24px;top:205.69px;font-family:'Liberation Sans';font-size:4.6px;line-height:4.6px;font-weight:bold;font-style:normal;color:#111;transform:scaleX(1.3000);transform-origin:0 3.91px;-webkit-text-stroke:0.3px #111">AH</div>
<div class="t" style="left:909.19px;top:205.69px;font-family:'Liberation Sans';font-size:4.6px;line-height:4.6px;font-weight:bold;font-style:normal;color:#111;transform:scaleX(1.3000);transform-origin:0 3.91px;-webkit-text-stroke:0.3px #111">AI</div>
<div class="t" style="left:946.89px;top:205.69px;font-family:'Liberation Sans';font-size:4.6px;line-height:4.6px;font-weight:bold;font-style:normal;color:#111;transform:scaleX(1.3000);transform-origin:0 3.91px;-webkit-text-stroke:0.3px #111">AJ</div>
<div class="t" style="left:985.24px;top:205.69px;font-family:'Liberation Sans';font-size:4.6px;line-height:4.6px;font-weight:bold;font-style:normal;color:#111;transform:scaleX(1.3000);transform-origin:0 3.91px;-webkit-text-stroke:0.3px #111">AK</div>
<div class="t" style="left:1024.89px;top:205.69px;font-family:'Liberation Sans';font-size:4.6px;line-height:4.6px;font-weight:bold;font-style:normal;color:#111;transform:scaleX(1.3000);transform-origin:0 3.91px;-webkit-text-stroke:0.3px #111">AL</div>
<div class="t" style="left:1063.24px;top:205.69px;font-family:'Liberation Sans';font-size:4.6px;line-height:4.6px;font-weight:bold;font-style:normal;color:#111;transform:scaleX(1.3000);transform-origin:0 3.91px;-webkit-text-stroke:0.3px #111">AM</div>
<div class="t" style="left:1102.24px;top:205.69px;font-family:'Liberation Sans';font-size:4.6px;line-height:4.6px;font-weight:bold;font-style:normal;color:#111;transform:scaleX(1.3000);transform-origin:0 3.91px;-webkit-text-stroke:0.3px #111">AN</div>
<div class="t" style="left:1141.24px;top:205.69px;font-family:'Liberation Sans';font-size:4.6px;line-height:4.6px;font-weight:bold;font-style:normal;color:#111;transform:scaleX(1.3000);transform-origin:0 3.91px;-webkit-text-stroke:0.3px #111">AO</div>
<div class="t" style="left:1180.89px;top:205.69px;font-family:'Liberation Sans';font-size:4.6px;line-height:4.6px;font-weight:bold;font-style:normal;color:#111;transform:scaleX(1.3000);transform-origin:0 3.91px;-webkit-text-stroke:0.3px #111">AP</div>
<div class="t" style="left:1219.24px;top:205.69px;font-family:'Liberation Sans';font-size:4.6px;line-height:4.6px;font-weight:bold;font-style:normal;color:#111;transform:scaleX(1.3000);transform-origin:0 3.91px;-webkit-text-stroke:0.3px #111">AQ</div>
<div class="t" style="left:1258.24px;top:205.69px;font-family:'Liberation Sans';font-size:4.6px;line-height:4.6px;font-weight:bold;font-style:normal;color:#111;transform:scaleX(1.3000);transform-origin:0 3.91px;-webkit-text-stroke:0.3px #111">AR</div>
<div class="t" style="left:1297.89px;top:205.69px;font-family:'Liberation Sans';font-size:4.6px;line-height:4.6px;font-weight:bold;font-style:normal;color:#111;transform:scaleX(1.3000);transform-origin:0 3.91px;-webkit-text-stroke:0.3px #111">AS</div>
<div class="t" style="left:1338.12px;top:205.69px;font-family:'Liberation Sans';font-size:4.6px;line-height:4.6px;font-weight:bold;font-style:normal;color:#111;transform:scaleX(1.3000);transform-origin:0 3.91px;-webkit-text-stroke:0.3px #111">AT</div>
<div class="a" style="left:0;top:211px;width:1345px;height:1px;background:#a6a6a6"></div>
<div class="a" style="left:11px;top:203px;width:1px;height:475px;background:#a6a6a6"></div>
<div class="a" style="left:0;top:232px;width:11px;height:1px;background:#c4c4c4"></div><div class="a" style="left:0;top:246px;width:11px;height:1px;background:#c4c4c4"></div><div class="a" style="left:0;top:260px;width:11px;height:1px;background:#c4c4c4"></div><div class="a" style="left:0;top:276px;width:11px;height:1px;background:#c4c4c4"></div><div class="a" style="left:0;top:292px;width:11px;height:1px;background:#c4c4c4"></div><div class="a" style="left:0;top:308px;width:11px;height:1px;background:#c4c4c4"></div><div class="a" style="left:0;top:324px;width:11px;height:1px;background:#c4c4c4"></div><div class="a" style="left:0;top:340px;width:11px;height:1px;background:#c4c4c4"></div><div class="a" style="left:0;top:356px;width:11px;height:1px;background:#c4c4c4"></div><div class="a" style="left:0;top:372px;width:11px;height:1px;background:#c4c4c4"></div><div class="a" style="left:0;top:388px;width:11px;height:1px;background:#c4c4c4"></div><div class="a" style="left:0;top:404px;width:11px;height:1px;background:#c4c4c4"></div><div class="a" style="left:0;top:420px;width:11px;height:1px;background:#c4c4c4"></div><div class="a" style="left:0;top:436px;width:11px;height:1px;background:#c4c4c4"></div><div class="a" style="left:0;top:452px;width:11px;height:1px;background:#c4c4c4"></div><div class="a" style="left:0;top:468px;width:11px;height:1px;background:#c4c4c4"></div><div class="a" style="left:0;top:484px;width:11px;height:1px;background:#c4c4c4"></div><div class="a" style="left:0;top:500px;width:11px;height:1px;background:#c4c4c4"></div><div class="a" style="left:0;top:515px;width:11px;height:1px;background:#c4c4c4"></div><div class="a" style="left:0;top:530px;width:11px;height:1px;background:#c4c4c4"></div><div class="a" style="left:0;top:545px;width:11px;height:1px;background:#c4c4c4"></div><div class="a" style="left:0;top:560px;width:11px;height:1px;background:#c4c4c4"></div><div class="a" style="left:0;top:575px;width:11px;height:1px;background:#c4c4c4"></div><div class="a" style="left:0;top:590px;width:11px;height:1px;background:#c4c4c4"></div><div class="a" style="left:0;top:605px;width:11px;height:1px;background:#c4c4c4"></div><div class="a" style="left:0;top:620px;width:11px;height:1px;background:#c4c4c4"></div><div class="a" style="left:0;top:635px;width:11px;height:1px;background:#c4c4c4"></div><div class="a" style="left:0;top:642px;width:11px;height:1px;background:#c4c4c4"></div><div class="a" style="left:0;top:649px;width:11px;height:1px;background:#c4c4c4"></div><div class="a" style="left:0;top:656px;width:11px;height:1px;background:#c4c4c4"></div><div class="a" style="left:0;top:663px;width:11px;height:1px;background:#c4c4c4"></div><div class="a" style="left:0;top:670px;width:11px;height:1px;background:#c4c4c4"></div><div class="a" style="left:0;top:677px;width:11px;height:1px;background:#c4c4c4"></div>
<div class="t" style="left:4.85px;top:226.99px;font-family:'Liberation Sans';font-size:4.6px;line-height:4.6px;font-weight:bold;font-style:normal;color:#111;transform:scaleX(1.3000);transform-origin:0 3.91px;-webkit-text-stroke:0.3px #111">1</div>
<div class="t" style="left:4.85px;top:240.99px;font-family:'Liberation Sans';font-size:4.6px;line-height:4.6px;font-weight:bold;font-style:normal;color:#111;transform:scaleX(1.3000);transform-origin:0 3.91px;-webkit-text-stroke:0.3px #111">2</div>
<div class="t" style="left:4.85px;top:254.99px;font-family:'Liberation Sans';font-size:4.6px;line-height:4.6px;font-weight:bold;font-style:normal;color:#111;transform:scaleX(1.3000);transform-origin:0 3.91px;-webkit-text-stroke:0.3px #111">3</div>
<div class="t" style="left:4.85px;top:270.99px;font-family:'Liberation Sans';font-size:4.6px;line-height:4.6px;font-weight:bold;font-style:normal;color:#111;transform:scaleX(1.3000);transform-origin:0 3.91px;-webkit-text-stroke:0.3px #111">4</div>
<div class="t" style="left:4.85px;top:286.99px;font-family:'Liberation Sans';font-size:4.6px;line-height:4.6px;font-weight:bold;font-style:normal;color:#111;transform:scaleX(1.3000);transform-origin:0 3.91px;-webkit-text-stroke:0.3px #111">5</div>
<div class="t" style="left:4.85px;top:302.99px;font-family:'Liberation Sans';font-size:4.6px;line-height:4.6px;font-weight:bold;font-style:normal;color:#111;transform:scaleX(1.3000);transform-origin:0 3.91px;-webkit-text-stroke:0.3px #111">6</div>
<div class="t" style="left:4.85px;top:318.99px;font-family:'Liberation Sans';font-size:4.6px;line-height:4.6px;font-weight:bold;font-style:normal;color:#111;transform:scaleX(1.3000);transform-origin:0 3.91px;-webkit-text-stroke:0.3px #111">7</div>
<div class="t" style="left:4.85px;top:334.99px;font-family:'Liberation Sans';font-size:4.6px;line-height:4.6px;font-weight:bold;font-style:normal;color:#111;transform:scaleX(1.3000);transform-origin:0 3.91px;-webkit-text-stroke:0.3px #111">8</div>
<div class="t" style="left:4.85px;top:350.99px;font-family:'Liberation Sans';font-size:4.6px;line-height:4.6px;font-weight:bold;font-style:normal;color:#111;transform:scaleX(1.3000);transform-origin:0 3.91px;-webkit-text-stroke:0.3px #111">9</div>
<div class="t" style="left:3.19px;top:366.99px;font-family:'Liberation Sans';font-size:4.6px;line-height:4.6px;font-weight:bold;font-style:normal;color:#17402a;transform:scaleX(1.3000);transform-origin:0 3.91px;-webkit-text-stroke:0.3px #17402a">10</div>
<div class="t" style="left:3.35px;top:382.99px;font-family:'Liberation Sans';font-size:4.6px;line-height:4.6px;font-weight:bold;font-style:normal;color:#111;transform:scaleX(1.3000);transform-origin:0 3.91px;-webkit-text-stroke:0.3px #111">11</div>
<div class="t" style="left:3.19px;top:398.99px;font-family:'Liberation Sans';font-size:4.6px;line-height:4.6px;font-weight:bold;font-style:normal;color:#111;transform:scaleX(1.3000);transform-origin:0 3.91px;-webkit-text-stroke:0.3px #111">12</div>
<div class="t" style="left:3.19px;top:414.99px;font-family:'Liberation Sans';font-size:4.6px;line-height:4.6px;font-weight:bold;font-style:normal;color:#111;transform:scaleX(1.3000);transform-origin:0 3.91px;-webkit-text-stroke:0.3px #111">13</div>
<div class="t" style="left:3.19px;top:430.99px;font-family:'Liberation Sans';font-size:4.6px;line-height:4.6px;font-weight:bold;font-style:normal;color:#111;transform:scaleX(1.3000);transform-origin:0 3.91px;-webkit-text-stroke:0.3px #111">14</div>
<div class="t" style="left:3.19px;top:446.99px;font-family:'Liberation Sans';font-size:4.6px;line-height:4.6px;font-weight:bold;font-style:normal;color:#111;transform:scaleX(1.3000);transform-origin:0 3.91px;-webkit-text-stroke:0.3px #111">15</div>
<div class="t" style="left:3.19px;top:462.99px;font-family:'Liberation Sans';font-size:4.6px;line-height:4.6px;font-weight:bold;font-style:normal;color:#111;transform:scaleX(1.3000);transform-origin:0 3.91px;-webkit-text-stroke:0.3px #111">16</div>
<div class="t" style="left:3.19px;top:478.99px;font-family:'Liberation Sans';font-size:4.6px;line-height:4.6px;font-weight:bold;font-style:normal;color:#111;transform:scaleX(1.3000);transform-origin:0 3.91px;-webkit-text-stroke:0.3px #111">17</div>
<div class="t" style="left:3.19px;top:494.99px;font-family:'Liberation Sans';font-size:4.6px;line-height:4.6px;font-weight:bold;font-style:normal;color:#111;transform:scaleX(1.3000);transform-origin:0 3.91px;-webkit-text-stroke:0.3px #111">18</div>
<div class="t" style="left:3.19px;top:509.99px;font-family:'Liberation Sans';font-size:4.6px;line-height:4.6px;font-weight:bold;font-style:normal;color:#111;transform:scaleX(1.3000);transform-origin:0 3.91px;-webkit-text-stroke:0.3px #111">19</div>
<div class="t" style="left:3.19px;top:524.99px;font-family:'Liberation Sans';font-size:4.6px;line-height:4.6px;font-weight:bold;font-style:normal;color:#111;transform:scaleX(1.3000);transform-origin:0 3.91px;-webkit-text-stroke:0.3px #111">20</div>
<div class="t" style="left:3.19px;top:539.99px;font-family:'Liberation Sans';font-size:4.6px;line-height:4.6px;font-weight:bold;font-style:normal;color:#111;transform:scaleX(1.3000);transform-origin:0 3.91px;-webkit-text-stroke:0.3px #111">21</div>
<div class="t" style="left:3.19px;top:554.99px;font-family:'Liberation Sans';font-size:4.6px;line-height:4.6px;font-weight:bold;font-style:normal;color:#111;transform:scaleX(1.3000);transform-origin:0 3.91px;-webkit-text-stroke:0.3px #111">22</div>
<div class="t" style="left:3.19px;top:569.99px;font-family:'Liberation Sans';font-size:4.6px;line-height:4.6px;font-weight:bold;font-style:normal;color:#111;transform:scaleX(1.3000);transform-origin:0 3.91px;-webkit-text-stroke:0.3px #111">23</div>
<div class="t" style="left:3.19px;top:584.99px;font-family:'Liberation Sans';font-size:4.6px;line-height:4.6px;font-weight:bold;font-style:normal;color:#111;transform:scaleX(1.3000);transform-origin:0 3.91px;-webkit-text-stroke:0.3px #111">24</div>
<div class="t" style="left:3.19px;top:599.99px;font-family:'Liberation Sans';font-size:4.6px;line-height:4.6px;font-weight:bold;font-style:normal;color:#111;transform:scaleX(1.3000);transform-origin:0 3.91px;-webkit-text-stroke:0.3px #111">25</div>
<div class="t" style="left:3.19px;top:614.99px;font-family:'Liberation Sans';font-size:4.6px;line-height:4.6px;font-weight:bold;font-style:normal;color:#111;transform:scaleX(1.3000);transform-origin:0 3.91px;-webkit-text-stroke:0.3px #111">26</div>
<div class="t" style="left:3.19px;top:629.99px;font-family:'Liberation Sans';font-size:4.6px;line-height:4.6px;font-weight:bold;font-style:normal;color:#111;transform:scaleX(1.3000);transform-origin:0 3.91px;-webkit-text-stroke:0.3px #111">27</div>
<div class="t" style="left:3.30px;top:637.25px;font-family:'Liberation Sans';font-size:4.3px;line-height:4.3px;font-weight:bold;font-style:normal;color:#111;transform:scaleX(1.3000);transform-origin:0 3.65px;-webkit-text-stroke:0.3px #111">28</div>
<div class="t" style="left:3.30px;top:644.25px;font-family:'Liberation Sans';font-size:4.3px;line-height:4.3px;font-weight:bold;font-style:normal;color:#111;transform:scaleX(1.3000);transform-origin:0 3.65px;-webkit-text-stroke:0.3px #111">29</div>
<div class="t" style="left:3.30px;top:651.25px;font-family:'Liberation Sans';font-size:4.3px;line-height:4.3px;font-weight:bold;font-style:normal;color:#111;transform:scaleX(1.3000);transform-origin:0 3.65px;-webkit-text-stroke:0.3px #111">30</div>
<div class="t" style="left:3.30px;top:658.25px;font-family:'Liberation Sans';font-size:4.3px;line-height:4.3px;font-weight:bold;font-style:normal;color:#111;transform:scaleX(1.3000);transform-origin:0 3.65px;-webkit-text-stroke:0.3px #111">31</div>
<div class="t" style="left:3.30px;top:665.25px;font-family:'Liberation Sans';font-size:4.3px;line-height:4.3px;font-weight:bold;font-style:normal;color:#111;transform:scaleX(1.3000);transform-origin:0 3.65px;-webkit-text-stroke:0.3px #111">32</div>
<div class="t" style="left:3.30px;top:672.25px;font-family:'Liberation Sans';font-size:4.3px;line-height:4.3px;font-weight:bold;font-style:normal;color:#111;transform:scaleX(1.3000);transform-origin:0 3.65px;-webkit-text-stroke:0.3px #111">33</div>
<div class="a" style="left:373px;top:210px;width:16px;height:2px;background:#217346"></div>
<div class="a" style="left:10px;top:356px;width:2px;height:17px;background:#217346"></div>
<div class="a" style="left:1344px;top:211px;width:1px;height:468px;background:#a6a6a6"></div>
<div class="a" style="left:0;top:678px;width:1345px;height:1px;background:#a6a6a6"></div>
<div class="a" style="left:1345px;top:200px;width:21px;height:479px;background:#e9e9e9"></div>
<div class="a" style="left:1348px;top:205px;width:15px;height:15px;background:#fff;border:1px solid #9e9e9e"></div>
<svg style="left:1351px;top:209.5px" width="9" height="6"><path d="M0 5 l4.5 -4.5 l4.5 4.5 z" fill="#222"/></svg>
<div class="a" style="left:1348px;top:220px;width:15px;height:29px;background:#fff;border:1px solid #9e9e9e"></div>
<div class="a" style="left:1348px;top:664px;width:15px;height:15px;background:#fff;border:1px solid #9e9e9e"></div>
<svg style="left:1351px;top:669.5px" width="9" height="6"><path d="M0 0 h9 l-4.5 4.5 z" fill="#222"/></svg>
<svg style="left:0;top:0" width="60" height="232">
<path d="M21.3 216.4 l-2.8 -2.6 l-4.1 4.4 l4.1 4.4 l3.7 -3.6 l-1.8 -1.7" fill="none" stroke="#8fc070" stroke-width="1.8" stroke-linejoin="round" stroke-linecap="round"/>
<circle cx="48" cy="225" r="2.1" fill="#dd4444"/>
</svg>
<div class="t" style="left:24.00px;top:214.60px;font-family:'Liberation Sans';font-size:8px;line-height:8px;font-weight:normal;font-style:normal;color:#4d4d4d;transform:scaleX(1.0614);transform-origin:0 6.80px;-webkit-text-stroke:0.35px #4d4d4d">Platzi</div>
<div class="t" style="left:29.30px;top:222.17px;font-family:'Liberation Sans';font-size:6.5px;line-height:6.5px;font-weight:normal;font-style:normal;color:#cf7a7a;transform:scaleX(1.0640);transform-origin:0 5.52px;-webkit-text-stroke:0.15px #cf7a7a">Doro</div>
<div class="t" style="left:65.00px;top:216.10px;font-family:'Liberation Sans';font-size:6px;line-height:6px;font-weight:bold;font-style:normal;color:#000;transform:scaleX(0.8693);transform-origin:0 5.10px;-webkit-text-stroke:0.25px #000">Bienvenido a la prueba Platzidoro. En este documento, encontrarás las palabras clave a las que hacen referencia los ejemplos de la derecha: todas tienen que ver con lo que has visto hasta</div>
<div class="t" style="left:125.50px;top:223.10px;font-family:'Liberation Sans';font-size:6px;line-height:6px;font-weight:bold;font-style:normal;color:#000;transform:scaleX(0.8960);transform-origin:0 5.10px;-webkit-text-stroke:0.25px #000">ahora en el curso. Ubica las palabras correctas en el cuadro para llenar el crucigrama. Revisa en el siguiente Pomodoro tus respuestas.</div>
<div class="a" style="left:58px;top:276px;width:18px;height:17px;background:#b4a7d6"></div>
<div class="t" style="left:66.00px;top:282.79px;font-family:'Liberation Sans';font-size:4.6px;line-height:4.6px;font-weight:bold;font-style:normal;color:#111;transform:scaleX(1.4000);transform-origin:0 3.91px;-webkit-text-stroke:0.3px #111">2</div>
<div class="a" style="left:75px;top:276px;width:18px;height:17px;background:#fff;border:1px solid #000"></div>
<div class="t" style="left:81.62px;top:280.81px;font-family:'Liberation Sans';font-size:7.4px;line-height:7.4px;font-weight:bold;font-style:normal;color:#000;transform:scaleX(1.1500);transform-origin:0 6.29px;-webkit-text-stroke:0.3px #000">E</div>
<div class="a" style="left:92px;top:276px;width:18px;height:17px;background:#fff;border:1px solid #000"></div>
<div class="t" style="left:98.62px;top:280.81px;font-family:'Liberation Sans';font-size:7.4px;line-height:7.4px;font-weight:bold;font-style:normal;color:#000;transform:scaleX(1.1500);transform-origin:0 6.29px;-webkit-text-stroke:0.3px #000">S</div>
<div class="a" style="left:109px;top:276px;width:18px;height:17px;background:#fff;border:1px solid #000"></div>
<div class="t" style="left:115.05px;top:280.81px;font-family:'Liberation Sans';font-size:7.4px;line-height:7.4px;font-weight:bold;font-style:normal;color:#000;transform:scaleX(1.1500);transform-origin:0 6.29px;-webkit-text-stroke:0.3px #000">C</div>
<div class="a" style="left:126px;top:276px;width:18px;height:17px;background:#fff;border:1px solid #000"></div>
<div class="t" style="left:132.62px;top:280.81px;font-family:'Liberation Sans';font-size:7.4px;line-height:7.4px;font-weight:bold;font-style:normal;color:#000;transform:scaleX(1.1500);transform-origin:0 6.29px;-webkit-text-stroke:0.3px #000">U</div>
<div class="a" style="left:143px;top:276px;width:18px;height:17px;background:#fff;border:1px solid #000"></div>
<div class="t" style="left:149.05px;top:280.81px;font-family:'Liberation Sans';font-size:7.4px;line-height:7.4px;font-weight:bold;font-style:normal;color:#000;transform:scaleX(1.1500);transform-origin:0 6.29px;-webkit-text-stroke:0.3px #000">C</div>
<div class="a" style="left:160px;top:276px;width:18px;height:17px;background:#fff;border:1px solid #000"></div>
<div class="t" style="left:166.62px;top:280.81px;font-family:'Liberation Sans';font-size:7.4px;line-height:7.4px;font-weight:bold;font-style:normal;color:#000;transform:scaleX(1.1500);transform-origin:0 6.29px;-webkit-text-stroke:0.3px #000">H</div>
<div class="a" style="left:177px;top:276px;width:16px;height:17px;background:#fff;border:1px solid #000"></div>
<div class="t" style="left:182.05px;top:280.81px;font-family:'Liberation Sans';font-size:7.4px;line-height:7.4px;font-weight:bold;font-style:normal;color:#000;transform:scaleX(1.1500);transform-origin:0 6.29px;-webkit-text-stroke:0.3px #000">A</div>
<div class="a" style="left:192px;top:276px;width:16px;height:17px;background:#b7b7b7;border:1px solid #000"></div>
<div class="a" style="left:207px;top:276px;width:16px;height:17px;background:#fff;border:1px solid #000"></div>
<div class="t" style="left:212.05px;top:280.81px;font-family:'Liberation Sans';font-size:7.4px;line-height:7.4px;font-weight:bold;font-style:normal;color:#000;transform:scaleX(1.1500);transform-origin:0 6.29px;-webkit-text-stroke:0.3px #000">C</div>
<div class="a" style="left:222px;top:276px;width:16px;height:17px;background:#fff;border:1px solid #000"></div>
<div class="t" style="left:227.05px;top:280.81px;font-family:'Liberation Sans';font-size:7.4px;line-height:7.4px;font-weight:bold;font-style:normal;color:#000;transform:scaleX(1.1500);transform-origin:0 6.29px;-webkit-text-stroke:0.3px #000">O</div>
<div class="a" style="left:237px;top:276px;width:16px;height:17px;background:#fff;border:1px solid #000"></div>
<div class="t" style="left:242.05px;top:280.81px;font-family:'Liberation Sans';font-size:7.4px;line-height:7.4px;font-weight:bold;font-style:normal;color:#000;transform:scaleX(1.1500);transform-origin:0 6.29px;-webkit-text-stroke:0.3px #000">M</div>
<div class="a" style="left:252px;top:276px;width:16px;height:17px;background:#fff;border:1px solid #000"></div>
<div class="t" style="left:257.62px;top:280.81px;font-family:'Liberation Sans';font-size:7.4px;line-height:7.4px;font-weight:bold;font-style:normal;color:#000;transform:scaleX(1.1500);transform-origin:0 6.29px;-webkit-text-stroke:0.3px #000">P</div>
<div class="a" style="left:267px;top:276px;width:16px;height:17px;background:#fff;border:1px solid #000"></div>
<div class="t" style="left:272.05px;top:280.81px;font-family:'Liberation Sans';font-size:7.4px;line-height:7.4px;font-weight:bold;font-style:normal;color:#000;transform:scaleX(1.1500);transform-origin:0 6.29px;-webkit-text-stroke:0.3px #000">R</div>
<div class="a" style="left:282px;top:276px;width:16px;height:17px;background:#fff;border:1px solid #000"></div>
<div class="t" style="left:287.05px;top:280.81px;font-family:'Liberation Sans';font-size:7.4px;line-height:7.4px;font-weight:bold;font-style:normal;color:#000;transform:scaleX(1.1500);transform-origin:0 6.29px;-webkit-text-stroke:0.3px #000">O</div>
<div class="a" style="left:297px;top:276px;width:16px;height:17px;background:#fff;border:1px solid #000"></div>
<div class="t" style="left:302.05px;top:280.81px;font-family:'Liberation Sans';font-size:7.4px;line-height:7.4px;font-weight:bold;font-style:normal;color:#000;transform:scaleX(1.1500);transform-origin:0 6.29px;-webkit-text-stroke:0.3px #000">M</div>
<div class="a" style="left:312px;top:276px;width:16px;height:17px;background:#fff;border:1px solid #000"></div>
<div class="t" style="left:317.62px;top:280.81px;font-family:'Liberation Sans';font-size:7.4px;line-height:7.4px;font-weight:bold;font-style:normal;color:#000;transform:scaleX(1.1500);transform-origin:0 6.29px;-webkit-text-stroke:0.3px #000">E</div>
<div class="a" style="left:327px;top:276px;width:16px;height:17px;background:#fff;border:1px solid #000"></div>
<div class="t" style="left:332.62px;top:280.81px;font-family:'Liberation Sans';font-size:7.4px;line-height:7.4px;font-weight:bold;font-style:normal;color:#000;transform:scaleX(1.1500);transform-origin:0 6.29px;-webkit-text-stroke:0.3px #000">T</div>
<div class="a" style="left:342px;top:276px;width:16px;height:17px;background:#fff;border:1px solid #000"></div>
<div class="t" style="left:349.35px;top:280.81px;font-family:'Liberation Sans';font-size:7.4px;line-height:7.4px;font-weight:bold;font-style:normal;color:#000;transform:scaleX(1.1500);transform-origin:0 6.29px;-webkit-text-stroke:0.3px #000">I</div>
<div class="a" style="left:357px;top:276px;width:16px;height:17px;background:#fff;border:1px solid #000"></div>
<div class="t" style="left:362.05px;top:280.81px;font-family:'Liberation Sans';font-size:7.4px;line-height:7.4px;font-weight:bold;font-style:normal;color:#000;transform:scaleX(1.1500);transform-origin:0 6.29px;-webkit-text-stroke:0.3px #000">D</div>
<div class="a" style="left:372px;top:276px;width:16px;height:17px;background:#fff;border:1px solid #000"></div>
<div class="t" style="left:377.05px;top:280.81px;font-family:'Liberation Sans';font-size:7.4px;line-height:7.4px;font-weight:bold;font-style:normal;color:#000;transform:scaleX(1.1500);transform-origin:0 6.29px;-webkit-text-stroke:0.3px #000">A</div>
<div class="a" style="left:177px;top:246px;width:16px;height:15px;background:#d5a6bd"></div>
<div class="t" style="left:184.00px;top:251.79px;font-family:'Liberation Sans';font-size:4.6px;line-height:4.6px;font-weight:bold;font-style:normal;color:#111;transform:scaleX(1.4000);transform-origin:0 3.91px;-webkit-text-stroke:0.3px #111">1</div>
<div class="a" style="left:177px;top:260px;width:16px;height:17px;background:#fff;border:1px solid #000"></div>
<div class="t" style="left:182.62px;top:264.81px;font-family:'Liberation Sans';font-size:7.4px;line-height:7.4px;font-weight:bold;font-style:normal;color:#000;transform:scaleX(1.1500);transform-origin:0 6.29px;-webkit-text-stroke:0.3px #000">H</div>
<div class="a" style="left:177px;top:292px;width:16px;height:17px;background:#fff;border:1px solid #000"></div>
<div class="t" style="left:182.62px;top:296.81px;font-family:'Liberation Sans';font-size:7.4px;line-height:7.4px;font-weight:bold;font-style:normal;color:#000;transform:scaleX(1.1500);transform-origin:0 6.29px;-webkit-text-stroke:0.3px #000">B</div>
<div class="a" style="left:177px;top:308px;width:16px;height:17px;background:#fff;border:1px solid #000"></div>
<div class="t" style="left:184.35px;top:312.81px;font-family:'Liberation Sans';font-size:7.4px;line-height:7.4px;font-weight:bold;font-style:normal;color:#000;transform:scaleX(1.1500);transform-origin:0 6.29px;-webkit-text-stroke:0.3px #000">I</div>
<div class="a" style="left:177px;top:324px;width:16px;height:17px;background:#fff;border:1px solid #000"></div>
<div class="t" style="left:182.62px;top:328.81px;font-family:'Liberation Sans';font-size:7.4px;line-height:7.4px;font-weight:bold;font-style:normal;color:#000;transform:scaleX(1.1500);transform-origin:0 6.29px;-webkit-text-stroke:0.3px #000">L</div>
<div class="a" style="left:177px;top:340px;width:16px;height:17px;background:#fff;border:1px solid #000"></div>
<div class="t" style="left:184.35px;top:344.81px;font-family:'Liberation Sans';font-size:7.4px;line-height:7.4px;font-weight:bold;font-style:normal;color:#000;transform:scaleX(1.1500);transform-origin:0 6.29px;-webkit-text-stroke:0.3px #000">I</div>
<div class="a" style="left:177px;top:356px;width:16px;height:17px;background:#fff;border:1px solid #000"></div>
<div class="t" style="left:182.05px;top:360.81px;font-family:'Liberation Sans';font-size:7.4px;line-height:7.4px;font-weight:bold;font-style:normal;color:#000;transform:scaleX(1.1500);transform-origin:0 6.29px;-webkit-text-stroke:0.3px #000">D</div>
<div class="a" style="left:177px;top:372px;width:16px;height:17px;background:#fff;border:1px solid #000"></div>
<div class="t" style="left:182.05px;top:376.81px;font-family:'Liberation Sans';font-size:7.4px;line-height:7.4px;font-weight:bold;font-style:normal;color:#000;transform:scaleX(1.1500);transform-origin:0 6.29px;-webkit-text-stroke:0.3px #000">A</div>
<div class="a" style="left:177px;top:388px;width:16px;height:17px;background:#fff;border:1px solid #000"></div>
<div class="t" style="left:182.05px;top:392.81px;font-family:'Liberation Sans';font-size:7.4px;line-height:7.4px;font-weight:bold;font-style:normal;color:#000;transform:scaleX(1.1500);transform-origin:0 6.29px;-webkit-text-stroke:0.3px #000">D</div>
<div class="a" style="left:177px;top:404px;width:16px;height:17px;background:#b7b7b7;border:1px solid #000"></div>
<div class="a" style="left:177px;top:420px;width:16px;height:17px;background:#fff;border:1px solid #000"></div>
<div class="t" style="left:182.62px;top:424.81px;font-family:'Liberation Sans';font-size:7.4px;line-height:7.4px;font-weight:bold;font-style:normal;color:#000;transform:scaleX(1.1500);transform-origin:0 6.29px;-webkit-text-stroke:0.3px #000">B</div>
<div class="a" style="left:177px;top:436px;width:16px;height:17px;background:#fff;border:1px solid #000"></div>
<div class="t" style="left:182.62px;top:440.81px;font-family:'Liberation Sans';font-size:7.4px;line-height:7.4px;font-weight:bold;font-style:normal;color:#000;transform:scaleX(1.1500);transform-origin:0 6.29px;-webkit-text-stroke:0.3px #000">L</div>
<div class="a" style="left:177px;top:452px;width:16px;height:17px;background:#fff;border:1px solid #000"></div>
<div class="t" style="left:182.05px;top:456.81px;font-family:'Liberation Sans';font-size:7.4px;line-height:7.4px;font-weight:bold;font-style:normal;color:#000;transform:scaleX(1.1500);transform-origin:0 6.29px;-webkit-text-stroke:0.3px #000">A</div>
<div class="a" style="left:177px;top:468px;width:16px;height:17px;background:#fff;border:1px solid #000"></div>
<div class="t" style="left:182.62px;top:472.81px;font-family:'Liberation Sans';font-size:7.4px;line-height:7.4px;font-weight:bold;font-style:normal;color:#000;transform:scaleX(1.1500);transform-origin:0 6.29px;-webkit-text-stroke:0.3px #000">N</div>
<div class="a" style="left:177px;top:484px;width:16px;height:17px;background:#fff;border:1px solid #000"></div>
<div class="t" style="left:182.05px;top:488.81px;font-family:'Liberation Sans';font-size:7.4px;line-height:7.4px;font-weight:bold;font-style:normal;color:#000;transform:scaleX(1.1500);transform-origin:0 6.29px;-webkit-text-stroke:0.3px #000">D</div>
<div class="a" style="left:177px;top:500px;width:16px;height:16px;background:#fff;border:1px solid #000"></div>
<div class="t" style="left:182.05px;top:504.81px;font-family:'Liberation Sans';font-size:7.4px;line-height:7.4px;font-weight:bold;font-style:normal;color:#000;transform:scaleX(1.1500);transform-origin:0 6.29px;-webkit-text-stroke:0.3px #000">A</div>
<div class="a" style="left:252px;top:260px;width:16px;height:17px;background:#9fc5e8"></div>
<div class="t" style="left:259.00px;top:266.79px;font-family:'Liberation Sans';font-size:4.6px;line-height:4.6px;font-weight:bold;font-style:normal;color:#111;transform:scaleX(1.4000);transform-origin:0 3.91px;-webkit-text-stroke:0.3px #111">3</div>
<div class="a" style="left:252px;top:292px;width:16px;height:17px;background:#fff;border:1px solid #000"></div>
<div class="t" style="left:257.62px;top:296.81px;font-family:'Liberation Sans';font-size:7.4px;line-height:7.4px;font-weight:bold;font-style:normal;color:#000;transform:scaleX(1.1500);transform-origin:0 6.29px;-webkit-text-stroke:0.3px #000">E</div>
<div class="a" style="left:252px;top:308px;width:16px;height:17px;background:#fff;border:1px solid #000"></div>
<div class="t" style="left:257.05px;top:312.81px;font-family:'Liberation Sans';font-size:7.4px;line-height:7.4px;font-weight:bold;font-style:normal;color:#000;transform:scaleX(1.1500);transform-origin:0 6.29px;-webkit-text-stroke:0.3px #000">D</div>
<div class="a" style="left:252px;top:324px;width:16px;height:17px;background:#fff;border:1px solid #000"></div>
<div class="t" style="left:259.35px;top:328.81px;font-family:'Liberation Sans';font-size:7.4px;line-height:7.4px;font-weight:bold;font-style:normal;color:#000;transform:scaleX(1.1500);transform-origin:0 6.29px;-webkit-text-stroke:0.3px #000">I</div>
<div class="a" style="left:252px;top:340px;width:16px;height:17px;background:#fff;border:1px solid #000"></div>
<div class="t" style="left:257.05px;top:344.81px;font-family:'Liberation Sans';font-size:7.4px;line-height:7.4px;font-weight:bold;font-style:normal;color:#000;transform:scaleX(1.1500);transform-origin:0 6.29px;-webkit-text-stroke:0.3px #000">D</div>
<div class="a" style="left:252px;top:356px;width:16px;height:17px;background:#fff;border:1px solid #000"></div>
<div class="t" style="left:257.05px;top:360.81px;font-family:'Liberation Sans';font-size:7.4px;line-height:7.4px;font-weight:bold;font-style:normal;color:#000;transform:scaleX(1.1500);transform-origin:0 6.29px;-webkit-text-stroke:0.3px #000">O</div>
<div class="a" style="left:282px;top:260px;width:16px;height:17px;background:#a2c4c9"></div>
<div class="t" style="left:289.00px;top:266.79px;font-family:'Liberation Sans';font-size:4.6px;line-height:4.6px;font-weight:bold;font-style:normal;color:#111;transform:scaleX(1.4000);transform-origin:0 3.91px;-webkit-text-stroke:0.3px #111">6</div>
<div class="a" style="left:282px;top:292px;width:16px;height:17px;background:#fff;border:1px solid #000"></div>
<div class="t" style="left:287.62px;top:296.81px;font-family:'Liberation Sans';font-size:7.4px;line-height:7.4px;font-weight:bold;font-style:normal;color:#000;transform:scaleX(1.1500);transform-origin:0 6.29px;-webkit-text-stroke:0.3px #000">F</div>
<div class="a" style="left:282px;top:308px;width:16px;height:17px;background:#fff;border:1px solid #000"></div>
<div class="t" style="left:287.62px;top:312.81px;font-family:'Liberation Sans';font-size:7.4px;line-height:7.4px;font-weight:bold;font-style:normal;color:#000;transform:scaleX(1.1500);transform-origin:0 6.29px;-webkit-text-stroke:0.3px #000">E</div>
<div class="a" style="left:282px;top:324px;width:16px;height:17px;background:#fff;border:1px solid #000"></div>
<div class="t" style="left:287.05px;top:328.81px;font-family:'Liberation Sans';font-size:7.4px;line-height:7.4px;font-weight:bold;font-style:normal;color:#000;transform:scaleX(1.1500);transform-origin:0 6.29px;-webkit-text-stroke:0.3px #000">R</div>
<div class="a" style="left:282px;top:340px;width:16px;height:17px;background:#fff;border:1px solid #000"></div>
<div class="t" style="left:287.62px;top:344.81px;font-family:'Liberation Sans';font-size:7.4px;line-height:7.4px;font-weight:bold;font-style:normal;color:#000;transform:scaleX(1.1500);transform-origin:0 6.29px;-webkit-text-stroke:0.3px #000">T</div>
<div class="a" style="left:282px;top:356px;width:16px;height:17px;background:#fff;border:1px solid #000"></div>
<div class="t" style="left:287.05px;top:360.81px;font-family:'Liberation Sans';font-size:7.4px;line-height:7.4px;font-weight:bold;font-style:normal;color:#000;transform:scaleX(1.1500);transform-origin:0 6.29px;-webkit-text-stroke:0.3px #000">A</div>
<div class="a" style="left:372px;top:246px;width:16px;height:15px;background:#f9cb9c"></div>
<div class="t" style="left:379.00px;top:251.79px;font-family:'Liberation Sans';font-size:4.6px;line-height:4.6px;font-weight:bold;font-style:normal;color:#111;transform:scaleX(1.4000);transform-origin:0 3.91px;-webkit-text-stroke:0.3px #111">4</div>
<div class="a" style="left:372px;top:260px;width:16px;height:17px;background:#fff;border:1px solid #000"></div>
<div class="t" style="left:377.62px;top:264.81px;font-family:'Liberation Sans';font-size:7.4px;line-height:7.4px;font-weight:bold;font-style:normal;color:#000;transform:scaleX(1.1500);transform-origin:0 6.29px;-webkit-text-stroke:0.3px #000">H</div>
<div class="a" style="left:372px;top:292px;width:16px;height:17px;background:#fff;border:1px solid #000"></div>
<div class="t" style="left:377.62px;top:296.81px;font-family:'Liberation Sans';font-size:7.4px;line-height:7.4px;font-weight:bold;font-style:normal;color:#000;transform:scaleX(1.1500);transform-origin:0 6.29px;-webkit-text-stroke:0.3px #000">B</div>
<div class="a" style="left:372px;top:308px;width:16px;height:17px;background:#fff;border:1px solid #000"></div>
<div class="t" style="left:377.62px;top:312.81px;font-family:'Liberation Sans';font-size:7.4px;line-height:7.4px;font-weight:bold;font-style:normal;color:#000;transform:scaleX(1.1500);transform-origin:0 6.29px;-webkit-text-stroke:0.3px #000">L</div>
<div class="a" style="left:372px;top:324px;width:16px;height:17px;background:#fff;border:1px solid #000"></div>
<div class="t" style="left:377.05px;top:328.81px;font-family:'Liberation Sans';font-size:7.4px;line-height:7.4px;font-weight:bold;font-style:normal;color:#000;transform:scaleX(1.1500);transform-origin:0 6.29px;-webkit-text-stroke:0.3px #000">A</div>
<div class="a" style="left:372px;top:340px;width:16px;height:17px;background:#fff;border:1px solid #000"></div>
<div class="t" style="left:377.05px;top:344.81px;font-family:'Liberation Sans';font-size:7.4px;line-height:7.4px;font-weight:bold;font-style:normal;color:#000;transform:scaleX(1.1500);transform-origin:0 6.29px;-webkit-text-stroke:0.3px #000">R</div>
<div class="a" style="left:372px;top:356px;width:16px;height:17px;background:#b7b7b7;border:1px solid #000"></div>
<div class="a" style="left:372px;top:372px;width:16px;height:17px;background:#fff;border:1px solid #000"></div>
<div class="t" style="left:377.05px;top:376.81px;font-family:'Liberation Sans';font-size:7.4px;line-height:7.4px;font-weight:bold;font-style:normal;color:#000;transform:scaleX(1.1500);transform-origin:0 6.29px;-webkit-text-stroke:0.3px #000">R</div>
<div class="a" style="left:372px;top:388px;width:16px;height:17px;background:#fff;border:1px solid #000"></div>
<div class="t" style="left:377.62px;top:392.81px;font-family:'Liberation Sans';font-size:7.4px;line-height:7.4px;font-weight:bold;font-style:normal;color:#000;transform:scaleX(1.1500);transform-origin:0 6.29px;-webkit-text-stroke:0.3px #000">E</div>
<div class="a" style="left:372px;top:404px;width:16px;height:17px;background:#fff;border:1px solid #000"></div>
<div class="t" style="left:377.62px;top:408.81px;font-family:'Liberation Sans';font-size:7.4px;line-height:7.4px;font-weight:bold;font-style:normal;color:#000;transform:scaleX(1.1500);transform-origin:0 6.29px;-webkit-text-stroke:0.3px #000">S</div>
<div class="a" style="left:372px;top:420px;width:16px;height:17px;background:#fff;border:1px solid #000"></div>
<div class="t" style="left:377.62px;top:424.81px;font-family:'Liberation Sans';font-size:7.4px;line-height:7.4px;font-weight:bold;font-style:normal;color:#000;transform:scaleX(1.1500);transform-origin:0 6.29px;-webkit-text-stroke:0.3px #000">P</div>
<div class="a" style="left:372px;top:436px;width:16px;height:17px;background:#fff;border:1px solid #000"></div>
<div class="t" style="left:377.05px;top:440.81px;font-family:'Liberation Sans';font-size:7.4px;line-height:7.4px;font-weight:bold;font-style:normal;color:#000;transform:scaleX(1.1500);transform-origin:0 6.29px;-webkit-text-stroke:0.3px #000">O</div>
<div class="a" style="left:372px;top:452px;width:16px;height:17px;background:#fff;border:1px solid #000"></div>
<div class="t" style="left:377.62px;top:456.81px;font-family:'Liberation Sans';font-size:7.4px;line-height:7.4px;font-weight:bold;font-style:normal;color:#000;transform:scaleX(1.1500);transform-origin:0 6.29px;-webkit-text-stroke:0.3px #000">N</div>
<div class="a" style="left:372px;top:468px;width:16px;height:17px;background:#fff;border:1px solid #000"></div>
<div class="t" style="left:377.62px;top:472.81px;font-family:'Liberation Sans';font-size:7.4px;line-height:7.4px;font-weight:bold;font-style:normal;color:#000;transform:scaleX(1.1500);transform-origin:0 6.29px;-webkit-text-stroke:0.3px #000">S</div>
<div class="a" style="left:372px;top:484px;width:16px;height:17px;background:#fff;border:1px solid #000"></div>
<div class="t" style="left:377.05px;top:488.81px;font-family:'Liberation Sans';font-size:7.4px;line-height:7.4px;font-weight:bold;font-style:normal;color:#000;transform:scaleX(1.1500);transform-origin:0 6.29px;-webkit-text-stroke:0.3px #000">A</div>
<div class="a" style="left:372px;top:500px;width:16px;height:16px;background:#fff;border:1px solid #000"></div>
<div class="t" style="left:377.62px;top:504.81px;font-family:'Liberation Sans';font-size:7.4px;line-height:7.4px;font-weight:bold;font-style:normal;color:#000;transform:scaleX(1.1500);transform-origin:0 6.29px;-webkit-text-stroke:0.3px #000">B</div>
<div class="a" style="left:372px;top:515px;width:16px;height:16px;background:#fff;border:1px solid #000"></div>
<div class="t" style="left:377.62px;top:519.81px;font-family:'Liberation Sans';font-size:7.4px;line-height:7.4px;font-weight:bold;font-style:normal;color:#000;transform:scaleX(1.1500);transform-origin:0 6.29px;-webkit-text-stroke:0.3px #000">L</div>
<div class="a" style="left:372px;top:530px;width:16px;height:16px;background:#fff;border:1px solid #000"></div>
<div class="t" style="left:377.62px;top:534.81px;font-family:'Liberation Sans';font-size:7.4px;line-height:7.4px;font-weight:bold;font-style:normal;color:#000;transform:scaleX(1.1500);transform-origin:0 6.29px;-webkit-text-stroke:0.3px #000">E</div>
<div class="a" style="left:372px;top:545px;width:16px;height:16px;background:#fff;border:1px solid #000"></div>
<div class="t" style="left:377.05px;top:549.81px;font-family:'Liberation Sans';font-size:7.4px;line-height:7.4px;font-weight:bold;font-style:normal;color:#000;transform:scaleX(1.1500);transform-origin:0 6.29px;-webkit-text-stroke:0.3px #000">M</div>
<div class="a" style="left:372px;top:560px;width:16px;height:16px;background:#fff;border:1px solid #000"></div>
<div class="t" style="left:377.62px;top:564.81px;font-family:'Liberation Sans';font-size:7.4px;line-height:7.4px;font-weight:bold;font-style:normal;color:#000;transform:scaleX(1.1500);transform-origin:0 6.29px;-webkit-text-stroke:0.3px #000">E</div>
<div class="a" style="left:372px;top:575px;width:16px;height:16px;background:#fff;border:1px solid #000"></div>
<div class="t" style="left:377.62px;top:579.81px;font-family:'Liberation Sans';font-size:7.4px;line-height:7.4px;font-weight:bold;font-style:normal;color:#000;transform:scaleX(1.1500);transform-origin:0 6.29px;-webkit-text-stroke:0.3px #000">N</div>
<div class="a" style="left:372px;top:590px;width:16px;height:16px;background:#fff;border:1px solid #000"></div>
<div class="t" style="left:377.62px;top:594.81px;font-family:'Liberation Sans';font-size:7.4px;line-height:7.4px;font-weight:bold;font-style:normal;color:#000;transform:scaleX(1.1500);transform-origin:0 6.29px;-webkit-text-stroke:0.3px #000">T</div>
<div class="a" style="left:372px;top:605px;width:16px;height:16px;background:#fff;border:1px solid #000"></div>
<div class="t" style="left:377.62px;top:609.81px;font-family:'Liberation Sans';font-size:7.4px;line-height:7.4px;font-weight:bold;font-style:normal;color:#000;transform:scaleX(1.1500);transform-origin:0 6.29px;-webkit-text-stroke:0.3px #000">E</div>
<div class="a" style="left:267px;top:484px;width:16px;height:17px;background:#ffe599"></div>
<div class="t" style="left:274.00px;top:490.79px;font-family:'Liberation Sans';font-size:4.6px;line-height:4.6px;font-weight:bold;font-style:normal;color:#111;transform:scaleX(1.4000);transform-origin:0 3.91px;-webkit-text-stroke:0.3px #111">5</div>
<div class="a" style="left:282px;top:484px;width:16px;height:17px;background:#fff;border:1px solid #000"></div>
<div class="t" style="left:287.62px;top:488.81px;font-family:'Liberation Sans';font-size:7.4px;line-height:7.4px;font-weight:bold;font-style:normal;color:#000;transform:scaleX(1.1500);transform-origin:0 6.29px;-webkit-text-stroke:0.3px #000">P</div>
<div class="a" style="left:297px;top:484px;width:16px;height:17px;background:#fff;border:1px solid #000"></div>
<div class="t" style="left:302.05px;top:488.81px;font-family:'Liberation Sans';font-size:7.4px;line-height:7.4px;font-weight:bold;font-style:normal;color:#000;transform:scaleX(1.1500);transform-origin:0 6.29px;-webkit-text-stroke:0.3px #000">R</div>
<div class="a" style="left:312px;top:484px;width:16px;height:17px;background:#fff;border:1px solid #000"></div>
<div class="t" style="left:317.05px;top:488.81px;font-family:'Liberation Sans';font-size:7.4px;line-height:7.4px;font-weight:bold;font-style:normal;color:#000;transform:scaleX(1.1500);transform-origin:0 6.29px;-webkit-text-stroke:0.3px #000">O</div>
<div class="a" style="left:327px;top:484px;width:16px;height:17px;background:#fff;border:1px solid #000"></div>
<div class="t" style="left:332.05px;top:488.81px;font-family:'Liberation Sans';font-size:7.4px;line-height:7.4px;font-weight:bold;font-style:normal;color:#000;transform:scaleX(1.1500);transform-origin:0 6.29px;-webkit-text-stroke:0.3px #000">M</div>
<div class="a" style="left:342px;top:484px;width:16px;height:17px;background:#fff;border:1px solid #000"></div>
<div class="t" style="left:347.62px;top:488.81px;font-family:'Liberation Sans';font-size:7.4px;line-height:7.4px;font-weight:bold;font-style:normal;color:#000;transform:scaleX(1.1500);transform-origin:0 6.29px;-webkit-text-stroke:0.3px #000">E</div>
<div class="a" style="left:357px;top:484px;width:16px;height:17px;background:#fff;border:1px solid #000"></div>
<div class="t" style="left:362.62px;top:488.81px;font-family:'Liberation Sans';font-size:7.4px;line-height:7.4px;font-weight:bold;font-style:normal;color:#000;transform:scaleX(1.1500);transform-origin:0 6.29px;-webkit-text-stroke:0.3px #000">S</div>
<div class="a" style="left:371px;top:355px;width:18px;height:19px;border:2px solid #266b47"></div>
<div class="a" style="left:373px;top:357px;width:14px;height:15px;border:1px solid #fff;background:#b7b7b7"></div>
<div class="a" style="left:384.5px;top:369.5px;width:6px;height:6px;background:#266b47;border:1px solid #fff"></div>
<div class="a" style="left:402px;top:246px;width:139px;height:15px;background:#d9d9d9"></div>
<div class="t" style="left:459.80px;top:251.28px;font-family:'Liberation Sans';font-size:5.2px;line-height:5.2px;font-weight:bold;font-style:normal;color:#111;transform:scaleX(1.4547);transform-origin:0 4.42px;-webkit-text-stroke:0.3px #111">Pistas</div>
<div class="a" style="left:402px;top:260px;width:22px;height:33px;background:#d5a6bd"></div>
<div class="t" style="left:412.40px;top:274.59px;font-family:'Liberation Sans';font-size:4.6px;line-height:4.6px;font-weight:bold;font-style:normal;color:#111;transform:scaleX(1.4000);transform-origin:0 3.91px;-webkit-text-stroke:0.3px #111">1</div>
<div class="t" style="left:426.00px;top:267.00px;font-family:'Liberation Sans';font-size:6px;line-height:6px;font-weight:bold;font-style:normal;color:#000;transform:scaleX(0.8726);transform-origin:0 5.10px;-webkit-text-stroke:0.25px #000">Cualidad intangible que puede aprenderse, y</div>
<div class="t" style="left:426.00px;top:273.90px;font-family:'Liberation Sans';font-size:6px;line-height:6px;font-weight:bold;font-style:normal;color:#000;transform:scaleX(0.8821);transform-origin:0 5.10px;-webkit-text-stroke:0.25px #000">que difícilmente podrá ser reemplazada por</div>
<div class="t" style="left:426.00px;top:280.80px;font-family:'Liberation Sans';font-size:6px;line-height:6px;font-weight:bold;font-style:normal;color:#000;transform:scaleX(0.8683);transform-origin:0 5.10px;-webkit-text-stroke:0.25px #000">máquinas o robots (2 palabras)</div>
<div class="a" style="left:402px;top:292px;width:22px;height:33px;background:#b4a7d6"></div>
<div class="t" style="left:412.40px;top:306.59px;font-family:'Liberation Sans';font-size:4.6px;line-height:4.6px;font-weight:bold;font-style:normal;color:#111;transform:scaleX(1.4000);transform-origin:0 3.91px;-webkit-text-stroke:0.3px #111">2</div>
<div class="t" style="left:426.00px;top:291.70px;font-family:'Liberation Sans';font-size:6px;line-height:6px;font-weight:bold;font-style:normal;color:#000;transform:scaleX(0.8381);transform-origin:0 5.10px;-webkit-text-stroke:0.25px #000">Tipo de escucha que procura la satisfacción</div>
<div class="t" style="left:426.00px;top:298.60px;font-family:'Liberation Sans';font-size:6px;line-height:6px;font-weight:bold;font-style:normal;color:#000;transform:scaleX(0.8614);transform-origin:0 5.10px;-webkit-text-stroke:0.25px #000">del otro priorizando la relación y la emoción.</div>
<div class="t" style="left:426.00px;top:305.70px;font-family:'Liberation Sans';font-size:6px;line-height:6px;font-weight:bold;font-style:normal;color:#000;transform:scaleX(0.8629);transform-origin:0 5.10px;-webkit-text-stroke:0.25px #000">Tiene un efecto de empoderamiento y deja</div>
<div class="t" style="left:426.00px;top:312.50px;font-family:'Liberation Sans';font-size:6px;line-height:6px;font-weight:bold;font-style:normal;color:#000;transform:scaleX(0.8722);transform-origin:0 5.10px;-webkit-text-stroke:0.25px #000">una sensación muy clara de libertad. (2</div>
<div class="t" style="left:426.00px;top:319.40px;font-family:'Liberation Sans';font-size:6px;line-height:6px;font-weight:bold;font-style:normal;color:#000;transform:scaleX(0.9071);transform-origin:0 5.10px;-webkit-text-stroke:0.25px #000">palabras)</div>
<div class="a" style="left:402px;top:324px;width:22px;height:33px;background:#9fc5e8"></div>
<div class="t" style="left:412.40px;top:338.59px;font-family:'Liberation Sans';font-size:4.6px;line-height:4.6px;font-weight:bold;font-style:normal;color:#111;transform:scaleX(1.4000);transform-origin:0 3.91px;-webkit-text-stroke:0.3px #111">3</div>
<div class="t" style="left:426.00px;top:333.40px;font-family:'Liberation Sans';font-size:6px;line-height:6px;font-weight:bold;font-style:normal;color:#000;transform:scaleX(0.8750);transform-origin:0 5.10px;-webkit-text-stroke:0.25px #000">Primero de tres pasos dentro de un flujo de</div>
<div class="t" style="left:426.00px;top:340.60px;font-family:'Liberation Sans';font-size:6px;line-height:6px;font-weight:bold;font-style:normal;color:#000;transform:scaleX(0.9278);transform-origin:0 5.10px;-webkit-text-stroke:0.25px #000">trabajo efectivo.</div>
<div class="a" style="left:402px;top:356px;width:22px;height:33px;background:#f9cb9c"></div>
<div class="t" style="left:412.40px;top:370.59px;font-family:'Liberation Sans';font-size:4.6px;line-height:4.6px;font-weight:bold;font-style:normal;color:#111;transform:scaleX(1.4000);transform-origin:0 3.91px;-webkit-text-stroke:0.3px #111">4</div>
<div class="t" style="left:426.00px;top:365.60px;font-family:'Liberation Sans';font-size:6px;line-height:6px;font-weight:bold;font-style:normal;color:#000;transform:scaleX(0.8777);transform-origin:0 5.10px;-webkit-text-stroke:0.25px #000">Herramienta clave de la comunicación</div>
<div class="t" style="left:426.00px;top:372.80px;font-family:'Liberation Sans';font-size:6px;line-height:6px;font-weight:bold;font-style:normal;color:#000;transform:scaleX(0.9186);transform-origin:0 5.10px;-webkit-text-stroke:0.25px #000">efectiva (2 palabras)</div>
<div class="a" style="left:402px;top:388px;width:22px;height:33px;background:#ffe599"></div>
<div class="t" style="left:412.40px;top:402.59px;font-family:'Liberation Sans';font-size:4.6px;line-height:4.6px;font-weight:bold;font-style:normal;color:#111;transform:scaleX(1.4000);transform-origin:0 3.91px;-webkit-text-stroke:0.3px #111">5</div>
<div class="t" style="left:426.00px;top:397.30px;font-family:'Liberation Sans';font-size:6px;line-height:6px;font-weight:bold;font-style:normal;color:#000;transform:scaleX(0.8821);transform-origin:0 5.10px;-webkit-text-stroke:0.25px #000">Tercero de tres pasos dentro de un flujo de</div>
<div class="t" style="left:426.00px;top:404.50px;font-family:'Liberation Sans';font-size:6px;line-height:6px;font-weight:bold;font-style:normal;color:#000;transform:scaleX(0.9278);transform-origin:0 5.10px;-webkit-text-stroke:0.25px #000">trabajo efectivo.</div>
<div class="a" style="left:402px;top:420px;width:22px;height:33px;background:#a2c4c9"></div>
<div class="t" style="left:412.40px;top:434.59px;font-family:'Liberation Sans';font-size:4.6px;line-height:4.6px;font-weight:bold;font-style:normal;color:#111;transform:scaleX(1.4000);transform-origin:0 3.91px;-webkit-text-stroke:0.3px #111">6</div>
<div class="t" style="left:426.00px;top:429.30px;font-family:'Liberation Sans';font-size:6px;line-height:6px;font-weight:bold;font-style:normal;color:#000;transform:scaleX(0.8483);transform-origin:0 5.10px;-webkit-text-stroke:0.25px #000">Segundo de tres pasos dentro de un flujo de</div>
<div class="t" style="left:426.00px;top:436.30px;font-family:'Liberation Sans';font-size:6px;line-height:6px;font-weight:bold;font-style:normal;color:#000;transform:scaleX(0.9278);transform-origin:0 5.10px;-webkit-text-stroke:0.25px #000">trabajo efectivo.</div>
<div class="a" style="left:0;top:679px;width:1366px;height:27px;background:#e6e6e6"></div>
<div class="a" style="left:0;top:706px;width:1366px;height:1px;background:#d0d0d0"></div>
<svg style="left:0;top:0" width="80" height="706"><path d="M33 686.5 l-5 5 l5 5 z" fill="#b6b6b6"/><path d="M55 686.5 l5 5 l-5 5 z" fill="#b6b6b6"/></svg>
<div class="a" style="left:100px;top:682px;width:1px;height:20px;background:#8a8a8a"></div>
<div class="a" style="left:102.5px;top:681px;width:111px;height:22px;background:#d04423;border:1px solid #f0b8a8"></div>
<div class="t" style="left:114.30px;top:685.65px;font-family:'Liberation Sans';font-size:13px;line-height:13px;font-weight:normal;font-style:normal;color:#fde8e0;transform:scaleX(0.9955);transform-origin:0 11.05px;">Categorización</div>
<div class="a" style="left:215px;top:678px;width:109px;height:25px;background:linear-gradient(#ffffff 0%,#e4f9e4 45%,#b4f0b4 100%);border-left:1px solid #a0a0a0;border-right:1px solid #a0a0a0;border-bottom:2px solid #2a6a40"></div>
<div class="t" style="left:227.20px;top:685.65px;font-family:'Liberation Sans';font-size:13px;line-height:13px;font-weight:bold;font-style:normal;color:#1e6b3a;transform:scaleX(0.9637);transform-origin:0 11.05px;">2. Crucigrama</div>
<svg style="left:0;top:0" width="380" height="706"><circle cx="364.6" cy="691.8" r="7" fill="none" stroke="#6e6e6e" stroke-width="1.2"/><path d="M364.6 687.8 v8 M360.6 691.8 h8" stroke="#6e6e6e" stroke-width="1.4"/></svg>
<svg style="left:818px;top:686px" width="4" height="12"><rect x="0.8" y="1" width="2" height="2" fill="#a8a8a8"/><rect x="0.8" y="5" width="2" height="2" fill="#a8a8a8"/><rect x="0.8" y="9" width="2" height="2" fill="#a8a8a8"/></svg>
<div class="a" style="left:836px;top:685px;width:15px;height:15px;background:#fff;border:1px solid #9a9a9a"></div>
<svg style="left:840.5px;top:688px" width="8" height="10"><path d="M5.5 0.5 v8 l-4 -4 z" fill="#222"/></svg>
<div class="a" style="left:851px;top:685px;width:468px;height:15px;background:#fff;border:1px solid #9a9a9a"></div>
<div class="a" style="left:1330px;top:685px;width:15px;height:15px;background:#fff;border:1px solid #9a9a9a"></div>
<svg style="left:1335.5px;top:688px" width="8" height="10"><path d="M1.5 0.5 v8 l4 -4 z" fill="#222"/></svg>
<div class="a" style="left:0;top:707px;width:1366px;height:21px;background:#f3f3f3"></div>
<div class="t" style="left:11.40px;top:711.28px;font-family:'Liberation Sans';font-size:12.5px;line-height:12.5px;font-weight:normal;font-style:normal;color:#333;transform:scaleX(0.8958);transform-origin:0 10.62px;">Listo</div>
<svg style="left:0;top:0" width="100" height="728">
<path d="M85.5 711.5 a7 7 0 0 0 -3.5 4" fill="none" stroke="#444" stroke-width="1.3"/>
<path d="M81.5 717.5 a6.5 6.5 0 0 0 5 5.2" fill="none" stroke="#444" stroke-width="1.3"/>
<path d="M87.5 710 v6 h6" fill="none" stroke="#444" stroke-width="1.2"/>
<path d="M92 713.8 l2 2.2 l-2 2.2" fill="none" stroke="#444" stroke-width="1.2"/>
<path d="M89 718.5 l7 6.5 M96 718.5 l-6.5 6.5" stroke="#333" stroke-width="1.7"/>
</svg>
<div class="t" style="left:100.40px;top:711.28px;font-family:'Liberation Sans';font-size:12.5px;line-height:12.5px;font-weight:bold;font-style:normal;color:#222;transform:scaleX(0.8402);transform-origin:0 10.62px;">Accesibilidad: es necesario investigar</div>
<div class="a" style="left:1066px;top:707px;width:40px;height:21px;background:#d0d0d0"></div>
<svg style="left:0;top:0" width="1366" height="728"><g fill="none" stroke="#6a6a6a" stroke-width="1.1">
<rect x="1079.5" y="710.5" width="12.5" height="12"/><path d="M1083.7 710.5 v12 M1087.9 710.5 v12 M1079.5 714.5 h12.5 M1079.5 718.5 h12.5"/>
</g>
<g fill="none" stroke="#666" stroke-width="1.1">
<rect x="1119.5" y="710.5" width="13" height="12"/><rect x="1122.5" y="713" width="7" height="7"/><path d="M1124 715 h4 M1124 717.5 h4"/>
<rect x="1159.5" y="710.5" width="13" height="12"/><path d="M1159.5 717 h5 v-6.5 M1168 710.5 v6.5 h4.5"/>
</g>
<rect x="1192" y="716" width="7" height="1.2" fill="#444"/>
<rect x="1205" y="716" width="99.5" height="1.2" fill="#555"/>
<rect x="1255" y="713" width="1.2" height="7" fill="#555"/>
<rect x="1221" y="712" width="5" height="10.7" fill="#217346"/>
<path d="M1313.8 712 v9 M1309.3 716.5 h9" stroke="#444" stroke-width="1.1"/>
</svg>
<div class="t" style="left:1331.00px;top:711.28px;font-family:'Liberation Sans';font-size:12.5px;line-height:12.5px;font-weight:normal;font-style:normal;color:#333;transform:scaleX(0.8432);transform-origin:0 10.62px;">39%</div>
<svg style="left:0;top:0" width="1366" height="768" opacity="0.08">
<path d="M1183 695 l-38 38 l38 38 l22 -22 l-14 -14 l14 -14 z" fill="none" stroke="#7fc050" stroke-width="16" stroke-linejoin="round"/>
<text x="1205" y="750" font-family="Liberation Sans" font-weight="bold" font-size="64" fill="#444">Platzi</text>
</svg>
<div class="a" style="left:0;top:728px;width:1366px;height:40px;background:#2c3223"></div>
<div class="a" style="left:1360px;top:728px;width:1px;height:40px;background:#5a5d55"></div>
<svg style="left:0;top:0" width="60" height="768"><g fill="#fff">
<path d="M16 742.2 l6.8 -1 v7 h-6.8 z"/><path d="M23.8 741 l8.4 -1.2 v8.4 h-8.4 z"/>
<path d="M16 749.2 h6.8 v7 l-6.8 -1 z"/><path d="M23.8 749.2 h8.4 v8.4 l-8.4 -1.2 z"/></g></svg>
<div class="a" style="left:48px;top:728.5px;width:288px;height:39.5px;background:#f0f0f0;border:1px solid #d4d4d4;border-bottom:none"></div>
<svg style="left:0;top:0" width="100" height="768"><circle cx="70.5" cy="746" r="5.3" fill="none" stroke="#222" stroke-width="1.4"/><path d="M66.8 749.8 l-6.3 6.3" stroke="#222" stroke-width="1.6"/></svg>
<div class="t" style="left:87.50px;top:741.33px;font-family:'Liberation Sans';font-size:15.5px;line-height:15.5px;font-weight:normal;font-style:normal;color:#333;transform:scaleX(0.9027);transform-origin:0 13.17px;">Buscar</div>
<div class="a" style="left:388px;top:728px;width:48px;height:40px;background:#58594a"></div>
<div class="a" style="left:388px;top:766px;width:48px;height:2px;background:#8fb8e6"></div>
<div class="a" style="left:686px;top:766px;width:42px;height:2px;background:#8fb8e6"></div>
<svg style="left:0;top:728px" width="740" height="40">
<defs>
<linearGradient id="edg" x1="0" y1="0" x2="1" y2="1"><stop offset="0" stop-color="#35c1f1"/><stop offset="1" stop-color="#0c59a4"/></linearGradient>
<linearGradient id="edg2" x1="0" y1="0" x2="1" y2="0.6"><stop offset="0" stop-color="#35b8ea"/><stop offset="0.55" stop-color="#3cc3c0"/><stop offset="1" stop-color="#6ad25a"/></linearGradient>
</defs>
<circle cx="363" cy="20" r="12.2" fill="#1b6fc8"/>
<path d="M351 19 a12.2 12.2 0 0 1 24.2 1.5 c0 4 -3 6.5 -6.5 6.5 c-3.5 0 -6 -2 -6 -4.5 c0 -2.5 -2 -4.5 -5 -4.5 c-3 0 -5.5 1.5 -6.7 1z" fill="url(#edg2)"/>
<path d="M351.2 20.5 c0.5 -2.5 3 -4 6 -4 c3 0 5.3 2 5.3 5 c0 3 2.5 5.5 6 5.5 c-2 3.5 -5.5 5.2 -9 5 c-4.5 -0.5 -8.5 -5 -8.3 -11.5z" fill="#1d5fb8"/>
<ellipse cx="362.5" cy="21.5" rx="3" ry="2.6" fill="#2c3223"/>
<rect x="405" y="9" width="18" height="22" rx="1.5" fill="#21a366"/>
<rect x="405" y="16" width="18" height="7" fill="#107c41"/>
<rect x="405" y="23" width="18" height="8" fill="#185c37"/>
<rect x="398" y="13" width="13" height="13" rx="1.5" fill="#107c41"/>
<path d="M401.5 16 l6 7 M407.5 16 l-6 7" stroke="#fff" stroke-width="1.7"/>
<path d="M451 12 h18 a2 2 0 0 1 2 2 v15 a2 2 0 0 1 -2 2 h-18 a2 2 0 0 1 -2 -2 v-15 a2 2 0 0 1 2 -2z" fill="#f4f4f4"/>
<path d="M454 12 v-3 a3 3 0 0 1 3 -3 h6 a3 3 0 0 1 3 3 v3" fill="none" stroke="#3aa0e0" stroke-width="2"/>
<rect x="455" y="16" width="4.5" height="4.5" fill="#f25022"/><rect x="460.5" y="16" width="4.5" height="4.5" fill="#7fba00"/>
<rect x="455" y="21.5" width="4.5" height="4.5" fill="#00a4ef"/><rect x="460.5" y="21.5" width="4.5" height="4.5" fill="#ffb900"/>
<rect x="503" y="9" width="18" height="22" rx="1.5" fill="#41a5ee"/>
<rect x="503" y="16" width="18" height="8" fill="#2b7cd3"/>
<rect x="503" y="24" width="18" height="7" fill="#185abd"/>
<rect x="496" y="13" width="13" height="13" rx="1.5" fill="#185abd"/>
<text x="497" y="24" font-family="Liberation Sans" font-weight="bold" font-size="11" fill="#fff">W</text>
<path d="M548 15 l12 -7 l12 7 v15 h-24z" fill="#28a8ea"/>
<path d="M548 17 l12 7 l12 -7 v13 h-24z" fill="#0f78d4"/>
<rect x="544" y="18" width="12" height="12" rx="1.5" fill="#0a5fb0"/>
<circle cx="550" cy="24" r="3" fill="none" stroke="#fff" stroke-width="1.6"/>
<path d="M595 11 h9 l2 2 h12 v17 h-23z" fill="#e9b52f"/>
<rect x="595" y="15" width="23" height="15" fill="#fbd455"/>
<path d="M600 21 h15 v7 h-3.5 v-3.5 h-8 v3.5 h-3.5 z" fill="#3e8ed0"/>
<circle cx="660" cy="20" r="11" fill="#ed6c47"/>
<path d="M660 9 a11 11 0 0 1 11 11 h-11z" fill="#ff8f6b"/>
<rect x="645" y="13" width="13" height="13" rx="1.5" fill="#c43e1c"/>
<text x="647.5" y="24" font-family="Liberation Sans" font-weight="bold" font-size="11" fill="#fff">P</text>
<path d="M706 20 L695.61 14.00 A12 12 0 0 1 716.39 14.00 Z" fill="#db4437"/><path d="M706 20 L716.39 14.00 A12 12 0 0 1 706.00 32.00 Z" fill="#fcc934"/><path d="M706 20 L706.00 32.00 A12 12 0 0 1 695.61 14.00 Z" fill="#1e9e50"/>
<circle cx="706" cy="20" r="5.5" fill="#fff"/>
<circle cx="706" cy="20" r="4.3" fill="#1a73e8"/>
</svg>
<svg style="left:0;top:0" width="1366" height="768">
<path d="M898 748 a12 10 0 0 1 24 0 z" fill="#79b8e8"/>
<path d="M910 748 v9 a2 2 0 0 1 -4 0" fill="none" stroke="#bbb" stroke-width="1.2"/>
<path d="M914 738 l-1 2 M918 740 l-1 2 M921 743 l-1 2" stroke="#79b8e8" stroke-width="1.3"/>
<g fill="none" stroke="#fff" stroke-width="1.2">
<path d="M1045.5 751 l5.8 -6 l5.8 6"/>
<rect x="1071" y="741" width="8" height="12" rx="3"/><path d="M1068.5 747 h2.5 M1079 747 h2.5"/>
<path d="M1093 753 a4 4 0 0 1 1 -7.5 a5 5 0 0 1 9.5 1 a3.5 3.5 0 0 1 0.5 6.5 z" stroke="#bbb"/><path d="M1091 742 l16 14" stroke="#bbb"/>
<rect x="1140.5" y="746" width="13" height="8" stroke="#fff"/><rect x="1154" y="748.5" width="1.6" height="3" fill="#fff"/><rect x="1142" y="747.5" width="7" height="5" fill="#fff" stroke="none"/>
<path d="M1165 756 a13 13 0 0 1 13 -13 M1168.5 756 a9.5 9.5 0 0 1 9.5 -9.5 M1172 756 a6 6 0 0 1 6 -6" stroke="#ddd"/>
<path d="M1186.5 746 h3 l4 -4 v14 l-4 -4 h-3 z M1196.5 745.5 a5 5 0 0 1 0 7 M1199.5 742.5 a9 9 0 0 1 0 13"/>

</g>
<path d="M1116 753 a4 4 0 0 1 1 -7.5 a5 5 0 0 1 9.5 1 a3.5 3.5 0 0 1 0.5 6.5 z" fill="#ccc"/>
<circle cx="1127.5" cy="754" r="4.2" fill="#1a7ed8"/><path d="M1127.5 752.5 v3.5" stroke="#fff" stroke-width="1.2"/>
<path d="M1325.5 740.5 h19 v14.5 h-11 l-4.5 4.5 v-4.5 h-3.5 z" fill="#fff"/><path d="M1329.5 745.5 h11 M1329.5 749 h11" stroke="#2c3223" stroke-width="1.1"/>
<circle cx="1343" cy="756" r="6.8" fill="#2c3223" stroke="#ddd" stroke-width="1.2"/>
</svg>
<div class="t" style="left:1341.30px;top:752.65px;font-family:'Liberation Sans';font-size:9px;line-height:9px;font-weight:normal;font-style:normal;color:#fff;transform:scaleX(0.6000);transform-origin:0 7.65px;">1</div>
<div class="t" style="left:928.09px;top:742.40px;font-family:'Liberation Sans';font-size:14px;line-height:14px;font-weight:normal;font-style:normal;color:#fff;transform:scaleX(1.0111);transform-origin:0 11.90px;">Lloverá pronto</div>
<div class="t" style="left:1215.20px;top:742.70px;font-family:'Liberation Sans';font-size:12px;line-height:12px;font-weight:normal;font-style:normal;color:#fff;transform:scaleX(0.7872);transform-origin:0 10.20px;">ESP</div>
<div class="t" style="left:1251.90px;top:734.08px;font-family:'Liberation Sans';font-size:12.5px;line-height:12.5px;font-weight:normal;font-style:normal;color:#fff;transform:scaleX(0.9363);transform-origin:0 10.62px;">7:12 p. m.</div>
<div class="t" style="left:1249.40px;top:751.88px;font-family:'Liberation Sans';font-size:12.5px;line-height:12.5px;font-weight:normal;font-style:normal;color:#fff;transform:scaleX(0.9338);transform-origin:0 10.62px;">19/11/2025</div>
</body></html>
